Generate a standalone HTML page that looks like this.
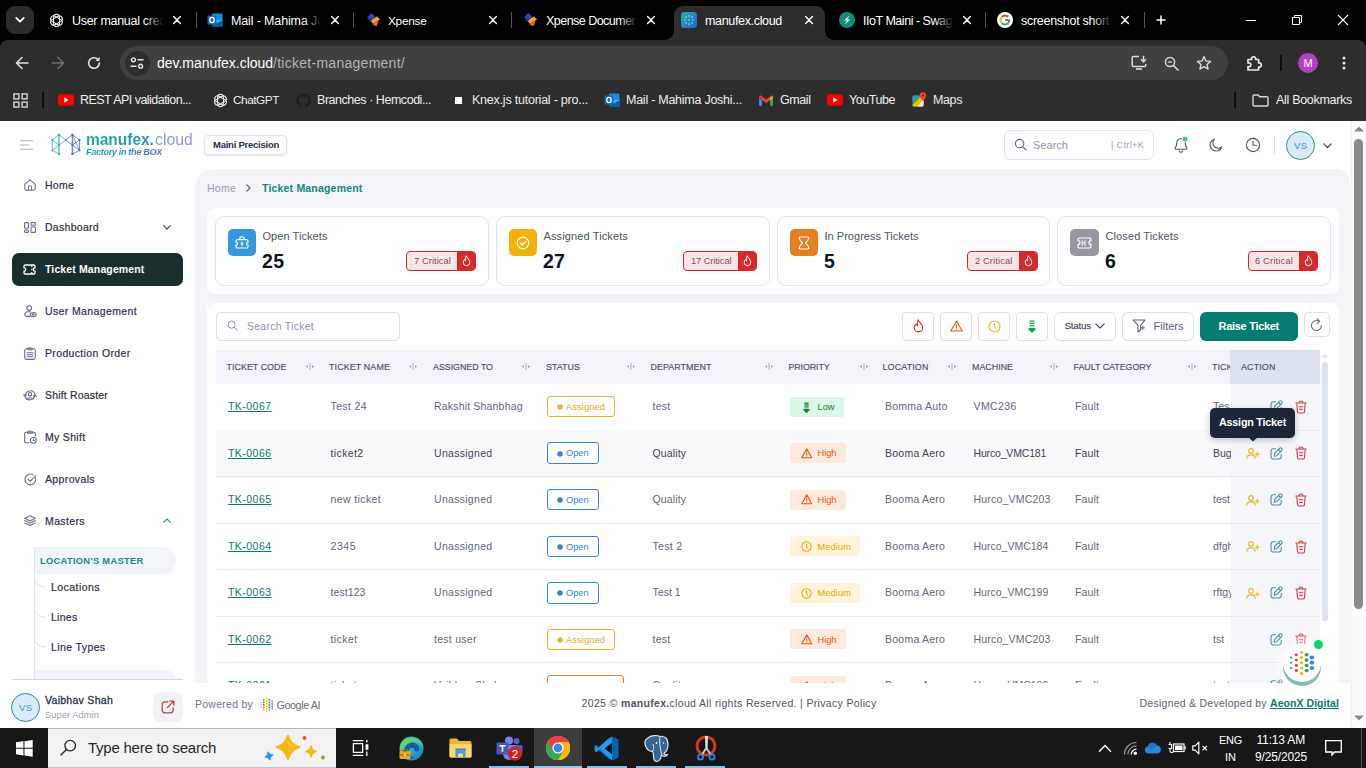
<!DOCTYPE html>
<html>
<head>
<meta charset="utf-8">
<title>manufex.cloud</title>
<style>
*{box-sizing:border-box;margin:0;padding:0}
html,body{width:1366px;height:768px;overflow:hidden;background:#fff;font-family:"Liberation Sans",sans-serif;}
.a{position:absolute}
.t{position:absolute;white-space:nowrap;line-height:1}
#root{position:relative;width:1366px;height:768px;overflow:hidden}
svg{position:absolute;overflow:visible}
/* ---------- browser chrome ---------- */
#tabstrip{left:0;top:0;width:1366px;height:50px;background:#000}
#toolbar{left:0;top:40px;width:1366px;height:81px;background:#2d2d2d;border-top-left-radius:8px;border-top-right-radius:8px}
.tt{position:absolute;top:13px;height:16px;line-height:16px;font-size:12.5px;color:#fff;white-space:nowrap;overflow:hidden}
.fade{position:absolute;top:8px;height:26px;width:22px;background:linear-gradient(90deg,rgba(0,0,0,0),#000 85%)}
.tsep{position:absolute;top:12px;width:1px;height:16px;background:#555}
.bm{position:absolute;top:92px;height:16px;line-height:16px;color:#eee;font-size:12.5px;white-space:nowrap}
/* ---------- app ---------- */
#app{left:0;top:121px;width:1350px;height:607px;background:#fff;overflow:hidden}
.nav{position:absolute;left:45px;font-size:10.5px;line-height:12px;color:#2b3050;white-space:nowrap;-webkit-text-stroke:.2px #2b3050}
.sub{position:absolute;left:51px;font-size:10.5px;line-height:12px;color:#2b3050;white-space:nowrap;-webkit-text-stroke:.2px #2b3050}
.ni{stroke:#687090;fill:none;stroke-width:1.1;stroke-linecap:round;stroke-linejoin:round}
.th{top:361.500px;font-size:8.900px;line-height:11px;color:#47506b;-webkit-text-stroke:.15px #47506b}
.td{font-size:10.500px;line-height:12px}
/* ---------- taskbar ---------- */
#taskbar{left:0;top:728px;width:1366px;height:40px;background:#171717}
</style>
</head>
<body>
<div id="root">
<!-- ================= TAB STRIP ================= -->
<div id="tabstrip" class="a"></div>
<div id="toolbar" class="a"></div>
<!-- tab search button -->
<div class="a" style="left:6px;top:6px;width:28px;height:28px;border-radius:9px;background:#2b2b2b"></div>
<svg style="left:15px;top:16px" width="10" height="8" viewBox="0 0 10 8"><path d="M1.2 1.8 L5 5.6 L8.8 1.8" fill="none" stroke="#fff" stroke-width="1.7" stroke-linecap="round" stroke-linejoin="round"/></svg>

<!-- active tab shape -->
<svg style="left:664px;top:6px" width="172" height="34" viewBox="0 0 172 34"><path d="M0 34 C6 34 10 30 10 24 L10 10 C10 4 14 0 20 0 L151 0 C157 0 161 4 161 10 L161 24 C161 30 165 34 171 34 Z" fill="#2d2d2d"/></svg>

<!-- tab 1 : ChatGPT -->
<svg style="left:48.500px;top:12.500px" width="15" height="15" viewBox="0 0 24 24"><g fill="none" stroke="#ececec" stroke-width="1.7"><rect x="7.300" y="2" width="9.400" height="20" rx="4.700" transform="rotate(0 12 12)"/><rect x="7.300" y="2" width="9.400" height="20" rx="4.700" transform="rotate(60 12 12)"/><rect x="7.300" y="2" width="9.400" height="20" rx="4.700" transform="rotate(120 12 12)"/></g></svg>
<div class="tt" style="left:72px;width:92px"><span style="letter-spacing:-0.291px">User manual crea</span></div>
<div class="fade" style="left:145px"></div>
<svg class="tx" style="left:173px;top:16px" width="8" height="8" viewBox="0 0 8 8"><path d="M0.6 0.6 L7.4 7.4 M7.4 0.6 L0.6 7.4" stroke="#fff" stroke-width="1.4" stroke-linecap="round"/></svg>
<div class="tsep" style="left:196px"></div>

<!-- tab 2 : Outlook -->
<svg style="left:207px;top:12px" width="16" height="16" viewBox="0 0 16 16"><rect x="5" y="1.5" width="10.5" height="13" rx="1.2" fill="#1490df"/><rect x="5" y="8" width="10.5" height="6.5" fill="#0a5cab"/><path d="M5 8 L15.5 8 L10 11.6 Z" fill="#35b8f1"/><rect x="0.5" y="3.5" width="9" height="9" rx="1.2" fill="#0f6cbd"/><ellipse cx="5" cy="8" rx="2.2" ry="2.6" fill="none" stroke="#fff" stroke-width="1.3"/></svg>
<div class="tt" style="left:231px;width:92px"><span style="letter-spacing:-0.136px">Mail - Mahima Jo</span></div>
<div class="fade" style="left:303px"></div>
<svg style="left:331px;top:16px" width="8" height="8" viewBox="0 0 8 8"><path d="M0.6 0.6 L7.4 7.4 M7.4 0.6 L0.6 7.4" stroke="#fff" stroke-width="1.4" stroke-linecap="round"/></svg>
<div class="tsep" style="left:353px"></div>

<!-- tab 3 : Xpense -->
<svg style="left:366px;top:12px" width="15" height="16" viewBox="0 0 15 16"><path d="M1 5.5 L5.5 1 L9.5 5 L4.5 7.5 Z" fill="#2b44d6"/><path d="M4 8.5 L11 4.5 L14 7.5 L7 11.5 Z" fill="#f7a338"/><path d="M6 12 L12.5 8.5 L10.5 14.5 Z" fill="#ef6b23"/><path d="M1.5 6 L3.5 10 L6.5 8 Z" fill="#1c2d9c"/></svg>
<div class="tt" style="left:388px;width:92px"><span style="font-size:11.800px;letter-spacing:-0.253px">Xpense</span></div>
<svg style="left:489px;top:16px" width="8" height="8" viewBox="0 0 8 8"><path d="M0.6 0.6 L7.4 7.4 M7.4 0.6 L0.6 7.4" stroke="#fff" stroke-width="1.4" stroke-linecap="round"/></svg>
<div class="tsep" style="left:511px"></div>

<!-- tab 4 : Xpense Docume -->
<svg style="left:523px;top:12px" width="15" height="16" viewBox="0 0 15 16"><path d="M1 5.5 L5.5 1 L9.5 5 L4.5 7.5 Z" fill="#2b44d6"/><path d="M4 8.5 L11 4.5 L14 7.5 L7 11.5 Z" fill="#f7a338"/><path d="M6 12 L12.5 8.5 L10.5 14.5 Z" fill="#ef6b23"/><path d="M1.5 6 L3.5 10 L6.5 8 Z" fill="#1c2d9c"/></svg>
<div class="tt" style="left:546px;width:92px"><span style="letter-spacing:-0.527px">Xpense Documen</span></div>
<div class="fade" style="left:619px"></div>
<svg style="left:647px;top:16px" width="8" height="8" viewBox="0 0 8 8"><path d="M0.6 0.6 L7.4 7.4 M7.4 0.6 L0.6 7.4" stroke="#fff" stroke-width="1.4" stroke-linecap="round"/></svg>

<!-- tab 5 : manufex.cloud (active) -->
<svg style="left:681px;top:12px" width="16" height="16" viewBox="0 0 16 16"><defs><linearGradient id="mfg" x1="0" y1="0" x2="1" y2="1"><stop offset="0" stop-color="#1fb6a8"/><stop offset="1" stop-color="#2a5bd0"/></linearGradient></defs><rect width="16" height="16" rx="3" fill="url(#mfg)"/><g fill="#9fe4f0"><circle cx="5" cy="5" r=".8"/><circle cx="8" cy="4" r=".8"/><circle cx="11" cy="5" r=".8"/><circle cx="4" cy="8" r=".8"/><circle cx="8" cy="8" r=".8"/><circle cx="12" cy="8" r=".8"/><circle cx="5" cy="11" r=".8"/><circle cx="8" cy="12" r=".8"/><circle cx="11" cy="11" r=".8"/></g></svg>
<div class="tt" style="left:705px;width:92px"><span style="letter-spacing:-0.332px">manufex.cloud</span></div>
<svg style="left:805px;top:16px" width="8" height="8" viewBox="0 0 8 8"><path d="M0.6 0.6 L7.4 7.4 M7.4 0.6 L0.6 7.4" stroke="#fff" stroke-width="1.4" stroke-linecap="round"/></svg>

<!-- tab 6 : IIoT Maini -->
<svg style="left:839px;top:12px" width="16" height="16" viewBox="0 0 16 16"><circle cx="8" cy="8" r="8" fill="#0f8f7a"/><path d="M10.8 3.2 L5.2 8.6 L8 8.6 L5.6 12.8 L11 7.4 L8.2 7.4 Z" fill="#fff"/></svg>
<div class="tt" style="left:863px;width:92px"><span style="letter-spacing:-0.472px">IIoT Maini - Swag</span></div>
<div class="fade" style="left:935px"></div>
<svg style="left:963px;top:16px" width="8" height="8" viewBox="0 0 8 8"><path d="M0.6 0.6 L7.4 7.4 M7.4 0.6 L0.6 7.4" stroke="#fff" stroke-width="1.4" stroke-linecap="round"/></svg>
<div class="tsep" style="left:985px"></div>

<!-- tab 7 : Google -->
<svg style="left:997px;top:12px" width="16" height="16" viewBox="0 0 16 16"><circle cx="8" cy="8" r="8" fill="#fff"/><path d="M8 3.6 A4.4 4.4 0 0 1 11.1 4.9" fill="none" stroke="#ea4335" stroke-width="2"/><path d="M4.9 4.9 A4.4 4.4 0 0 1 8 3.6" fill="none" stroke="#ea4335" stroke-width="2"/><path d="M4.9 11.1 A4.4 4.4 0 0 1 4.9 4.9" fill="none" stroke="#fbbc05" stroke-width="2"/><path d="M11.1 11.1 A4.4 4.4 0 0 1 4.9 11.1" fill="none" stroke="#34a853" stroke-width="2"/><path d="M12.4 8 A4.4 4.4 0 0 1 11.1 11.1" fill="none" stroke="#4285f4" stroke-width="2"/><path d="M8 8 L12.6 8" stroke="#4285f4" stroke-width="2"/></svg>
<div class="tt" style="left:1021px;width:92px"><span style="letter-spacing:-0.276px">screenshot short</span></div>
<div class="fade" style="left:1093px"></div>
<svg style="left:1121px;top:16px" width="8" height="8" viewBox="0 0 8 8"><path d="M0.6 0.6 L7.4 7.4 M7.4 0.6 L0.6 7.4" stroke="#fff" stroke-width="1.4" stroke-linecap="round"/></svg>
<div class="tsep" style="left:1144px"></div>
<!-- new tab + -->
<svg style="left:1156px;top:15px" width="10" height="10" viewBox="0 0 10 10"><path d="M5 0.5 V9.5 M0.5 5 H9.5" stroke="#fff" stroke-width="1.5"/></svg>
<!-- window controls -->
<div class="a" style="left:1246px;top:20px;width:10px;height:1px;background:#fff"></div>
<svg style="left:1292px;top:15px" width="10" height="10" viewBox="0 0 10 10"><path d="M0.5 2.5 H7.5 V9.5 H0.5 Z" fill="none" stroke="#fff" stroke-width="1"/><path d="M2.5 2.5 V0.5 H9.5 V7.5 H7.5" fill="none" stroke="#fff" stroke-width="1"/></svg>
<svg style="left:1338px;top:15px" width="10" height="10" viewBox="0 0 10 10"><path d="M0 0 L10 10 M10 0 L0 10" stroke="#fff" stroke-width="1.1"/></svg>

<!-- ================= TOOLBAR ================= -->
<!-- back -->
<svg style="left:15px;top:56px" width="14" height="14" viewBox="0 0 14 14"><path d="M13 7 H1.5 M7 1.5 L1.5 7 L7 12.5" fill="none" stroke="#e3e3e3" stroke-width="1.6" stroke-linecap="round" stroke-linejoin="round"/></svg>
<!-- forward -->
<svg style="left:51px;top:56px" width="14" height="14" viewBox="0 0 14 14"><path d="M1 7 H12.5 M7 1.5 L12.5 7 L7 12.5" fill="none" stroke="#6e6e6e" stroke-width="1.6" stroke-linecap="round" stroke-linejoin="round"/></svg>
<!-- reload -->
<svg style="left:87px;top:56px" width="14" height="14" viewBox="0 0 14 14"><path d="M12.3 7 A5.3 5.3 0 1 1 10.6 3.1" fill="none" stroke="#e3e3e3" stroke-width="1.6" stroke-linecap="round"/><path d="M12.6 0.8 V5 H8.4 Z" fill="#e3e3e3"/></svg>
<!-- omnibox -->
<div class="a" style="left:120px;top:46px;width:1108px;height:34px;border-radius:17px;background:#404040"></div>
<div class="a" style="left:124.500px;top:50.500px;width:25px;height:25px;border-radius:12.500px;background:#2e2e2e"></div>
<svg style="left:130px;top:57px" width="14" height="12" viewBox="0 0 14 12"><g fill="none" stroke="#e8e8e8" stroke-width="1.4" stroke-linecap="round"><circle cx="3.4" cy="2.8" r="1.9"/><path d="M8 2.8 H13"/><circle cx="10.6" cy="9.2" r="1.9"/><path d="M1 9.2 H6"/></g></svg>
<div class="t" style="left:157px;top:55px;font-size:14px;line-height:16px;color:#fff"><span style="letter-spacing:-0.028px">dev.manufex.cloud</span><span style="color:#b4b4b4;letter-spacing:0.271px">/ticket-management/</span></div>
<!-- install -->
<svg style="left:1131px;top:55px" width="17" height="16" viewBox="0 0 17 16"><path d="M8 1.5 H2.5 A1.3 1.3 0 0 0 1.2 2.8 V10.2 A1.3 1.3 0 0 0 2.5 11.5 H13.5 A1.3 1.3 0 0 0 14.8 10.2 V9" fill="none" stroke="#d8d8d8" stroke-width="1.5"/><path d="M5 14 H11" stroke="#d8d8d8" stroke-width="1.6"/><path d="M12.5 0.8 V6.5 M10 4.2 L12.5 6.8 L15 4.2" fill="none" stroke="#d8d8d8" stroke-width="1.5"/></svg>
<!-- zoom -->
<svg style="left:1164px;top:56px" width="15" height="15" viewBox="0 0 15 15"><circle cx="6" cy="6" r="4.6" fill="none" stroke="#d8d8d8" stroke-width="1.5"/><path d="M9.5 9.5 L14 14" stroke="#d8d8d8" stroke-width="1.7" stroke-linecap="round"/><path d="M3.8 6 H8.2" stroke="#d8d8d8" stroke-width="1.3"/></svg>
<!-- star -->
<svg style="left:1196px;top:55px" width="16" height="16" viewBox="0 0 16 16"><path d="M8 1.6 L9.9 6 L14.6 6.4 L11 9.5 L12.1 14.1 L8 11.6 L3.9 14.1 L5 9.5 L1.4 6.4 L6.1 6 Z" fill="none" stroke="#d8d8d8" stroke-width="1.4" stroke-linejoin="round"/></svg>
<!-- extensions -->
<svg style="left:1246px;top:54px" width="17" height="18" viewBox="0 0 17 18"><path d="M2 5.5 H5.6 A2.1 2.1 0 1 1 9.6 5.5 H12.6 V9 A2.1 2.1 0 1 1 12.6 13 V16 H2 V12.6 A2 2 0 1 0 2 9 Z" fill="none" stroke="#e8e8e8" stroke-width="1.7" stroke-linejoin="round"/></svg>
<div class="a" style="left:1280px;top:55px;width:2px;height:16px;background:#0a0a0a"></div>
<div class="a" style="left:1298px;top:53px;width:20px;height:20px;border-radius:10px;background:#b341c4;color:#fff;font-size:11px;line-height:20px;text-align:center">M</div>
<svg style="left:1342px;top:56px" width="4" height="14" viewBox="0 0 4 14"><g fill="#e3e3e3"><circle cx="2" cy="2" r="1.5"/><circle cx="2" cy="7" r="1.5"/><circle cx="2" cy="12" r="1.5"/></g></svg>

<!-- ================= BOOKMARKS ================= -->
<svg style="left:13px;top:93px" width="15" height="15" viewBox="0 0 15 15"><g fill="none" stroke="#d6d6d6" stroke-width="1.4"><rect x="0.9" y="0.9" width="5" height="5"/><rect x="9.1" y="0.9" width="5" height="5"/><rect x="0.9" y="9.1" width="5" height="5"/><rect x="9.1" y="9.1" width="5" height="5"/></g></svg>
<div class="a" style="left:42px;top:92px;width:2px;height:16px;background:#0a0a0a"></div>
<svg style="left:58px;top:94px" width="16" height="12" viewBox="0 0 16 12"><rect width="16" height="11.4" y=".3" rx="3.2" fill="#f00"/><path d="M6.3 3.2 L10.6 6 L6.3 8.8 Z" fill="#fff"/></svg>
<div class="bm" style="left:80px;letter-spacing:-0.534px">REST API validation...</div>
<svg style="left:212.500px;top:92.500px" width="15" height="15" viewBox="0 0 24 24"><g fill="none" stroke="#ececec" stroke-width="1.7"><rect x="7.300" y="2" width="9.400" height="20" rx="4.700" transform="rotate(0 12 12)"/><rect x="7.300" y="2" width="9.400" height="20" rx="4.700" transform="rotate(60 12 12)"/><rect x="7.300" y="2" width="9.400" height="20" rx="4.700" transform="rotate(120 12 12)"/></g></svg>
<div class="bm" style="left:233px;font-size:11.800px;letter-spacing:-0.453px">ChatGPT</div>
<svg style="left:296px;top:93px" width="15" height="15" viewBox="0 0 16 16"><path d="M8 .4 a7.8 7.8 0 0 0 -2.5 15.2 c.4 .1 .5 -.2 .5 -.4 v-1.4 c-2.2 .5 -2.6 -1 -2.6 -1 -.4 -.9 -.9 -1.2 -.9 -1.2 -.7 -.5 .1 -.5 .1 -.5 .8 .1 1.2 .8 1.2 .8 .7 1.2 1.9 .9 2.3 .7 .1 -.5 .3 -.9 .5 -1.1 -1.7 -.2 -3.6 -.9 -3.6 -3.9 0 -.9 .3 -1.6 .8 -2.1 -.1 -.2 -.4 -1 .1 -2.1 0 0 .7 -.2 2.2 .8 a7.5 7.5 0 0 1 4 0 c1.500 -1 2.200 -.800 2.200 -.800 .4 1.100 .2 1.900 .1 2.100 .5 .6 .8 1.300 .8 2.100 0 3 -1.800 3.700 -3.600 3.900 .3 .2 .5 .7 .5 1.500 v2.200 c0 .2 .1 .5 .5 .4 A7.800 7.800 0 0 0 8 .4 z" fill="#1c1e21"/></svg>
<div class="bm" style="left:317px;letter-spacing:-0.461px">Branches · Hemcodi...</div>
<div class="a" style="left:454px;top:96px;width:9px;height:9px;background:#2f3339"></div>
<div class="a" style="left:455px;top:97px;width:7px;height:7px;background:#fff"></div>
<div class="bm" style="left:472px;letter-spacing:-0.223px">Knex.js tutorial - pro...</div>
<svg style="left:604px;top:92px" width="16" height="16" viewBox="0 0 16 16"><rect x="5" y="1.5" width="10.5" height="13" rx="1.2" fill="#1490df"/><rect x="5" y="8" width="10.5" height="6.5" fill="#0a5cab"/><path d="M5 8 L15.5 8 L10 11.6 Z" fill="#35b8f1"/><rect x="0.5" y="3.5" width="9" height="9" rx="1.2" fill="#0f6cbd"/><ellipse cx="5" cy="8" rx="2.2" ry="2.6" fill="none" stroke="#fff" stroke-width="1.3"/></svg>
<div class="bm" style="left:626px;letter-spacing:-0.253px">Mail - Mahima Joshi...</div>
<svg style="left:759px;top:95px" width="14" height="11" viewBox="0 0 14 11"><path d="M0 1.2 V10.5 H3 V5 L7 8 L11 5 V10.5 H14 V1.2 L12.6 0.3 L7 4.5 L1.4 0.3 Z" fill="#ea4335"/><path d="M0 1.2 V10.5 H3 V3.4 Z" fill="#4285f4"/><path d="M14 1.2 V10.5 H11 V3.4 Z" fill="#34a853"/><path d="M0 1.2 L3 3.4 V5.2 L0 3 Z" fill="#c5221f"/><path d="M14 1.2 L11 3.4 V5.2 L14 3 Z" fill="#fbbc04"/></svg>
<div class="bm" style="left:780px;letter-spacing:-0.431px">Gmail</div>
<svg style="left:827px;top:94px" width="16" height="12" viewBox="0 0 16 12"><rect width="16" height="11.4" y=".3" rx="3.2" fill="#f00"/><path d="M6.3 3.2 L10.6 6 L6.3 8.8 Z" fill="#fff"/></svg>
<div class="bm" style="left:849px;letter-spacing:-0.446px">YouTube</div>
<svg style="left:912px;top:92px" width="15" height="16" viewBox="0 0 15 16"><rect x="0.5" y="3.5" width="11" height="11" rx="1.5" fill="#34a853"/><path d="M0.5 13 L8 5.5 L11.5 9 V13 A1.5 1.5 0 0 1 10 14.5 H2 A1.5 1.5 0 0 1 .5 13 Z" fill="#fbbc04"/><path d="M.5 5 A1.5 1.5 0 0 1 2 3.500 H6 L.5 9 Z" fill="#4285f4"/><path d="M5 14.500 L11.500 8 V13 A1.500 1.500 0 0 1 10 14.500 Z" fill="#e8eaed"/><path d="M11 0.300 A3.200 3.200 0 0 0 7.800 3.500 C7.800 5.800 11 9 11 9 C11 9 14.200 5.800 14.200 3.500 A3.200 3.200 0 0 0 11 .3 Z" fill="#ea4335"/><circle cx="11" cy="3.500" r="1.100" fill="#7b1d14"/></svg>
<div class="bm" style="left:933px;letter-spacing:-0.395px">Maps</div>
<div class="a" style="left:1234px;top:92px;width:2px;height:16px;background:#0a0a0a"></div>
<svg style="left:1252px;top:94px" width="17" height="13" viewBox="0 0 17 13"><path d="M1 2.200 A1.200 1.200 0 0 1 2.200 1 H6.200 L7.800 2.800 H14.800 A1.200 1.200 0 0 1 16 4 V10.800 A1.200 1.200 0 0 1 14.800 12 H2.200 A1.200 1.200 0 0 1 1 10.800 Z" fill="none" stroke="#d6d6d6" stroke-width="1.4"/></svg>
<div class="bm" style="left:1276px;letter-spacing:-0.299px">All Bookmarks</div>
<!-- ================= APP ================= -->
<div id="app" class="a"></div>
<!-- header: hamburger -->
<svg style="left:20px;top:140px" width="14" height="10" viewBox="0 0 14 10"><path d="M0.6 0.8 H12.6 M0.6 5 H9 M0.6 9.2 H12.6" stroke="#a9afc6" stroke-width="1.1" stroke-linecap="round"/></svg>
<!-- logo icon -->
<svg style="left:50px;top:133px" width="32" height="23" viewBox="0 0 32 23">
 <path d="M9 2 V21" stroke="#9fe0d8" stroke-width="2.200" opacity=".7"/>
 <path d="M22.400 2 V21" stroke="#aab6f0" stroke-width="2.200" opacity=".55"/>
 <g fill="none" stroke-width=".75">
  <path d="M8.800 1.600 L2.300 7 V17.300 L9 21 M8.800 1.600 L15.800 7 L9 12 L2.300 7 M2.300 17.300 L9 12 M9 1.600 V21" stroke="#2bb5a5"/>
  <path d="M15.800 7 L22.400 1.600 L29.500 7 V17.300 L22.400 21 V1.600 M15.800 7 L22.400 12 L29.500 17.300 M22.400 12 L29.500 7 M22.400 1.600 L29.500 17.300" stroke="#4463d6"/>
 </g>
 <g fill="#2bb5a5"><circle cx="8.800" cy="1.600" r="1.150"/><circle cx="2.300" cy="7" r="1.150"/><circle cx="2.300" cy="17.300" r="1.150"/><circle cx="9" cy="21" r="1.150"/><circle cx="9" cy="12" r="1.050"/><circle cx="15.800" cy="7" r="1.150"/></g>
 <g fill="#4463d6"><circle cx="22.400" cy="1.600" r="1.150"/><circle cx="29.500" cy="7" r="1.150"/><circle cx="29.500" cy="17.300" r="1.150"/><circle cx="22.400" cy="21" r="1.150"/><circle cx="22.400" cy="12" r="1.050"/></g>
</svg>
<!-- logo text -->
<div class="t" style="left:86px;top:131.200px;font-size:17px;line-height:18px;font-weight:bold;color:transparent;background:linear-gradient(90deg,#19ab98 10%,#2a8ec6 100%);-webkit-background-clip:text;background-clip:text;transform:scaleX(.91);transform-origin:0 0">manufex.</div>
<div class="t" style="left:155px;top:131.200px;font-size:17px;line-height:18px;color:transparent;background:linear-gradient(90deg,#74a0e6,#9a8cee);-webkit-background-clip:text;background-clip:text;transform:scaleX(.93);transform-origin:0 0">cloud</div>
<div class="t" style="left:86px;top:146.600px;font-size:9.200px;line-height:11px;font-style:italic;font-weight:bold;color:transparent;background:linear-gradient(90deg,#19ab98,#5a6fd8);-webkit-background-clip:text;background-clip:text;letter-spacing:-0.372px">Factory in the BOX</div>
<!-- company button -->
<div class="a" style="left:204px;top:135px;width:83px;height:20px;border:1px solid #e3e6ee;border-radius:4px;background:#fff;box-shadow:0 1px 2px rgba(40,50,90,.12)"></div>
<div class="t" style="left:213px;top:140px;font-size:9.5px;line-height:10px;font-weight:bold;color:#273048;letter-spacing:-0.246px">Maini Precision</div>

<!-- header: search -->
<div class="a" style="left:1004px;top:130px;width:150px;height:30px;border:1px solid #e1e5ef;border-radius:6px;background:#fff"></div>
<svg style="left:1014px;top:138px" width="13" height="13" viewBox="0 0 13 13"><circle cx="5.600" cy="5.600" r="4.200" fill="none" stroke="#5b6380" stroke-width="1.100"/><path d="M8.800 8.800 L12 12" stroke="#5b6380" stroke-width="1.100" stroke-linecap="round"/></svg>
<div class="t" style="left:1033px;top:139px;font-size:11px;line-height:12px;color:#8e96b5;letter-spacing:0.023px">Search</div>
<div class="t" style="left:1111px;top:140px;font-size:9px;line-height:10px;color:#9aa1bd;letter-spacing:0.363px">| Ctrl+K</div>
<!-- bell -->
<svg style="left:1173px;top:136px" width="16" height="18" viewBox="0 0 16 18"><path d="M8 2.500 C5 2.500 3.800 4.800 3.800 7 C3.800 9.500 3 10.800 2.200 11.800 C1.800 12.400 2.200 13.200 3 13.200 H13 C13.800 13.200 14.200 12.400 13.800 11.800 C13 10.800 12.200 9.500 12.200 7 C12.200 4.800 11 2.500 8 2.500 Z" fill="none" stroke="#4b5372" stroke-width="1.100"/><path d="M6.300 14.800 C6.600 15.800 7.200 16.300 8 16.300 C8.800 16.300 9.400 15.800 9.700 14.800" fill="none" stroke="#4b5372" stroke-width="1.100" stroke-linecap="round"/><circle cx="12" cy="3.200" r="3" fill="#3ecf6a" stroke="#fff" stroke-width=".9"/></svg>
<!-- moon -->
<svg style="left:1209px;top:138px" width="14" height="14" viewBox="0 0 14 14"><path d="M5.500 1.200 A6 6 0 1 0 12.800 8.800 A5 5 0 0 1 5.500 1.200 Z" fill="none" stroke="#4b5372" stroke-width="1.100" stroke-linejoin="round"/></svg>
<!-- clock -->
<svg style="left:1245px;top:137px" width="16" height="16" viewBox="0 0 16 16"><circle cx="8" cy="8" r="6.600" fill="none" stroke="#4b5372" stroke-width="1.100"/><path d="M8 4 V8.200 H11.500" fill="none" stroke="#4b5372" stroke-width="1.100" stroke-linecap="round"/></svg>
<div class="a" style="left:1274px;top:136px;width:1px;height:18px;background:#d9dde7"></div>
<div class="a" style="left:1286px;top:131px;width:29px;height:29px;border-radius:15px;background:#d9eaf9;border:1px solid #2a8f8a"></div>
<div class="t" style="left:1294px;top:141px;font-size:9.500px;line-height:10px;color:#4a8fd8;letter-spacing:0.406px">VS</div>
<svg style="left:1323px;top:143px" width="9" height="6" viewBox="0 0 9 6"><path d="M0.800 0.800 L4.500 4.500 L8.200 0.800" fill="none" stroke="#3b4460" stroke-width="1.200" stroke-linecap="round" stroke-linejoin="round"/></svg>

<!-- ================= SIDEBAR ================= -->
<!-- Home -->
<svg style="left:24px;top:179px" width="12" height="12" viewBox="0 0 12 12"><path class="ni" d="M0.800 5.200 L6 0.900 L11.200 5.200 V9.800 A1.400 1.400 0 0 1 9.800 11.200 H2.200 A1.400 1.400 0 0 1 0.800 9.800 Z"/><path class="ni" d="M4.400 11 V8.300 A1.600 1.600 0 0 1 7.600 8.300 V11"/></svg>
<div class="nav" style="top:179px;letter-spacing:0.246px">Home</div>
<!-- Dashboard -->
<svg style="left:24px;top:222px" width="12" height="11" viewBox="0 0 12 11"><rect class="ni" x="0.600" y="0.600" width="3.800" height="5.600" rx=".7"/><rect class="ni" x="7" y="0.600" width="4.400" height="2.600" rx=".7"/><rect class="ni" x="0.600" y="8" width="3.800" height="2.400" rx=".7"/><rect class="ni" x="7" y="5" width="4.400" height="5.400" rx=".7"/></svg>
<div class="nav" style="top:221px;letter-spacing:0.292px">Dashboard</div>
<svg style="left:163px;top:225px" width="8" height="5" viewBox="0 0 8 5"><path d="M0.700 0.700 L4 4 L7.300 0.700" fill="none" stroke="#3b4460" stroke-width="1.100" stroke-linecap="round" stroke-linejoin="round"/></svg>
<!-- Ticket Management (active) -->
<div class="a" style="left:12px;top:253px;width:171px;height:33px;border-radius:7px;background:#1a2e2e"></div>
<svg style="left:23px;top:264px" width="13" height="11" viewBox="0 0 13 11"><path d="M1 2.200 A1.200 1.200 0 0 1 2.200 1 H10.800 A1.200 1.200 0 0 1 12 2.200 V3.800 A1.700 1.700 0 0 0 12 7.200 V8.800 A1.200 1.200 0 0 1 10.800 10 H2.200 A1.200 1.200 0 0 1 1 8.800 V7.200 A1.700 1.700 0 0 0 1 3.800 Z" fill="none" stroke="#fff" stroke-width="1.300"/><path d="M8.800 1.500 V3 M8.800 4.700 V6.300 M8.800 8 V9.500" stroke="#fff" stroke-width="1.200"/></svg>
<div class="nav" style="top:263px;color:#fff;font-weight:bold;-webkit-text-stroke:0;letter-spacing:0.131px">Ticket Management</div>
<!-- User Management -->
<svg style="left:24px;top:305px" width="13" height="13" viewBox="0 0 13 13"><circle class="ni" cx="5.200" cy="3" r="2.300"/><path class="ni" d="M6.500 6.800 H3.800 A3 3 0 0 0 0.800 9.800 A1.600 1.600 0 0 0 2.400 11.400 H6"/><ellipse class="ni" cx="9.300" cy="9.600" rx="3" ry="2.100"/><circle class="ni" cx="9.300" cy="9.600" r=".8"/></svg>
<div class="nav" style="top:305px;letter-spacing:0.375px">User Management</div>
<!-- Production Order -->
<svg style="left:24px;top:347px" width="12" height="13" viewBox="0 0 12 13"><rect class="ni" x="0.700" y="1.800" width="10.600" height="10.600" rx="1.600"/><path class="ni" d="M3.800 1.900 C3.800 0.300 8.200 0.300 8.200 1.900 V2.800 H3.800 Z"/><path class="ni" d="M3 5.800 H9 M3 7.800 H9 M3 9.800 H9" stroke-width=".8"/></svg>
<div class="nav" style="top:347px;letter-spacing:0.346px">Production Order</div>
<!-- Shift Roaster -->
<svg style="left:23px;top:389px" width="14" height="13" viewBox="0 0 14 13"><path class="ni" d="M2.300 8.500 A5.200 5.200 0 0 1 11.800 4.500 M11.700 4.500 A5.200 5.200 0 0 1 2.400 8.600"/><path class="ni" d="M0.600 5.600 L2 7.200 L3.600 5.800 M13.400 7.400 L12 5.800 L10.400 7.200"/><circle class="ni" cx="7" cy="5.200" r="1.700"/><path class="ni" d="M3.900 10.200 C4.500 8.300 9.500 8.300 10.100 10.200"/></svg>
<div class="nav" style="top:389px;letter-spacing:0.177px">Shift Roaster</div>
<!-- My Shift -->
<svg style="left:24px;top:430px" width="13" height="14" viewBox="0 0 13 14"><path class="ni" d="M5 12.800 H2 A1.300 1.300 0 0 1 0.700 11.500 V3.500 A1.300 1.300 0 0 1 2 2.200 H10 A1.300 1.300 0 0 1 11.300 3.500 V6"/><path class="ni" d="M3.500 2.300 C3.500 0.500 8.500 0.500 8.500 2.300 V3.200 H3.500 Z"/><circle class="ni" cx="9.300" cy="10.200" r="3"/><path class="ni" d="M9.300 8.800 V10.400 H10.500" stroke-width=".9"/></svg>
<div class="nav" style="top:431px;letter-spacing:0.320px">My Shift</div>
<!-- Approvals -->
<svg style="left:24px;top:473px" width="13" height="13" viewBox="0 0 13 13"><path class="ni" d="M11.600 5 A5.400 5.400 0 1 1 9 1.700" stroke-width="1.200"/><path class="ni" d="M4 6.200 L6.200 8.400 L11.800 2.600" stroke-width="1.200"/></svg>
<div class="nav" style="top:473px;letter-spacing:0.366px">Approvals</div>
<!-- Masters -->
<svg style="left:24px;top:515px" width="12" height="12" viewBox="0 0 12 12"><path class="ni" d="M6 0.700 L11.300 3.300 L6 5.900 L0.700 3.300 Z"/><path class="ni" d="M0.700 5.600 L6 8.200 L11.300 5.600 M0.700 7.900 L6 10.500 L11.300 7.900" /></svg>
<div class="nav" style="top:515px;letter-spacing:0.379px">Masters</div>
<svg style="left:163px;top:518px" width="8" height="5" viewBox="0 0 8 5"><path d="M0.700 4.300 L4 1 L7.300 4.300" fill="none" stroke="#1f9488" stroke-width="1.100" stroke-linecap="round" stroke-linejoin="round"/></svg>
<!-- submenu -->
<div class="a" style="left:34px;top:547px;width:1px;height:132px;background:#dfe4ee"></div>
<div class="a" style="left:35px;top:547px;width:141px;height:27px;background:#f1f4f8;border-radius:0 14px 14px 0"></div>
<div class="t" style="left:40px;top:556px;font-size:9.300px;line-height:10px;font-weight:bold;color:#1a8a85;letter-spacing:0.317px">LOCATION'S MASTER</div>
<svg style="left:34px;top:575px" width="14" height="80" viewBox="0 0 14 80"><path d="M0.500 0 C0.500 8 3 12 12 12 M0.500 30 C0.500 38 3 42 12 42 M0.500 60 C0.500 68 3 72 12 72" fill="none" stroke="#dfe4ee" stroke-width="1"/></svg>
<div class="sub" style="top:581px;letter-spacing:0.450px">Locations</div>
<div class="sub" style="top:611px;letter-spacing:0.278px">Lines</div>
<div class="sub" style="top:641px;letter-spacing:0.391px">Line Types</div>
<div class="a" style="left:35px;top:670px;width:141px;height:10px;background:#f1f4f8;border-radius:0 14px 0 0"></div>
<!-- sidebar footer -->
<div class="a" style="left:0;top:679px;width:195px;height:49px;background:#fff"></div>
<div class="a" style="left:12px;top:679px;width:171px;height:1px;background:#d3d7df"></div>
<div class="a" style="left:11px;top:693px;width:29px;height:29px;border-radius:15px;background:#d9eaf9;border:1px solid #2a8f8a"></div>
<div class="t" style="left:19px;top:703px;font-size:9.500px;line-height:10px;color:#4a8fd8;letter-spacing:0.406px">VS</div>
<div class="t" style="left:45px;top:694px;font-size:10.500px;line-height:12px;color:#2b3050;-webkit-text-stroke:.3px #2b3050;letter-spacing:0.283px">Vaibhav Shah</div>
<div class="t" style="left:45px;top:710px;font-size:9.300px;line-height:10px;color:#9aa0b8;letter-spacing:0.070px">Super Admin</div>
<div class="a" style="left:153px;top:692px;width:30px;height:30px;border-radius:8px;background:#f1f3f7"></div>
<svg style="left:161px;top:700px" width="14" height="14" viewBox="0 0 14 14"><path d="M6.500 1.800 H4 A2.800 2.800 0 0 0 1.200 4.600 V10 A2.800 2.800 0 0 0 4 12.800 H9.400 A2.800 2.800 0 0 0 12.200 10 V7.500" fill="none" stroke="#dc2f2f" stroke-width="1.200" stroke-linecap="round"/><path d="M6.500 7.500 L12.600 1.400 M8.800 1.200 H12.800 V5.200" fill="none" stroke="#dc2f2f" stroke-width="1.200" stroke-linecap="round" stroke-linejoin="round"/></svg>
<!-- ================= MAIN ================= -->
<div class="a" style="left:195px;top:169px;width:1155px;height:514px;background:#f3f4f8;border-top-left-radius:20px;border-top-right-radius:14px"></div>
<!-- breadcrumb -->
<div class="t" style="left:207px;top:182px;font-size:10.500px;line-height:12px;color:#9aa1b5;letter-spacing:0.246px">Home</div>
<svg style="left:246px;top:184px" width="5" height="8" viewBox="0 0 5 8"><path d="M0.800 0.800 L4 4 L0.800 7.200" fill="none" stroke="#4b5563" stroke-width="1.100" stroke-linecap="round" stroke-linejoin="round"/></svg>
<div class="t" style="left:262px;top:182px;font-size:10.500px;line-height:12px;font-weight:bold;color:#14877c;letter-spacing:0.190px">Ticket Management</div>

<!-- cards container -->
<div class="a" style="left:207px;top:208px;width:1132px;height:86px;background:#fff;border-radius:8px"></div>
<!-- card 1 -->
<div class="a" style="left:215px;top:216px;width:274px;height:70px;border:1px solid #d9e9f8;border-radius:9px;background:#fff"></div>
<div class="a" style="left:228px;top:229px;width:28px;height:27px;border-radius:5px;background:#3498db"></div>
<svg style="left:235px;top:235px" width="14" height="15" viewBox="0 0 14 15"><path d="M4.600 4.200 C4.600 0.900 9.400 0.900 9.400 4.200" fill="none" stroke="#fff" stroke-width="1.200"/><path d="M2.600 4.600 H11.400 A1.600 1.600 0 0 1 13 6.200 V7.200 A1.500 1.500 0 0 0 13 10.200 V11.400 A1.600 1.600 0 0 1 11.400 13 H2.600 A1.600 1.600 0 0 1 1 11.400 V10.200 A1.500 1.500 0 0 0 1 7.200 V6.200 A1.600 1.600 0 0 1 2.600 4.600 Z" fill="none" stroke="#fff" stroke-width="1.200"/><path d="M7 6.500 V11.200 M5.500 8.800 H8.500" stroke="#fff" stroke-width="1.100"/></svg>
<div class="t" style="left:262.500px;top:230px;font-size:11px;line-height:13px;color:#4a5468;letter-spacing:0.066px">Open Tickets</div>
<div class="t" style="left:262px;top:250.500px;font-size:19.500px;line-height:21px;font-weight:bold;color:#0b1324;letter-spacing:0.398px">25</div>
<div class="a" style="left:406px;top:251px;width:70px;height:20px;border:1px solid #e02424;border-radius:4px;background:#fde6e6;overflow:hidden"><div class="a" style="right:0;top:0;width:18.500px;height:18px;background:#d42a2e"></div></div>
<div class="t" style="left:414px;top:256px;font-size:9.300px;line-height:10px;color:#6b5560;letter-spacing:0.083px">7 Critical</div>
<svg style="left:462px;top:255px" width="9" height="12" viewBox="0 0 9 12"><path d="M4.200 0.800 C4.800 2.600 7.800 4.600 7.800 7.400 A3.300 3.300 0 0 1 1.200 7.400 C1.200 6 2 5 2.600 4.400 C2.800 5.200 3.300 5.700 3.800 5.900 C3.400 4.200 3.500 2.200 4.200 0.800 Z" fill="none" stroke="#fff" stroke-width="1" stroke-linejoin="round"/></svg>
<!-- card 2 -->
<div class="a" style="left:496px;top:216px;width:274px;height:70px;border:1px solid #d9e9f8;border-radius:9px;background:#fff"></div>
<div class="a" style="left:509px;top:229px;width:28px;height:27px;border-radius:5px;background:#f1b20c"></div>
<svg style="left:516px;top:236px" width="14" height="14" viewBox="0 0 14 14"><circle cx="7" cy="7" r="5.800" fill="none" stroke="#fff" stroke-width="1.200"/><path d="M4.400 7.200 L6.200 9 L9.700 5.300" fill="none" stroke="#fff" stroke-width="1.200" stroke-linecap="round" stroke-linejoin="round"/></svg>
<div class="t" style="left:543.500px;top:230px;font-size:11px;line-height:13px;color:#4a5468;letter-spacing:0.122px">Assigned Tickets</div>
<div class="t" style="left:543px;top:250.500px;font-size:19.500px;line-height:21px;font-weight:bold;color:#0b1324;letter-spacing:0.148px">27</div>
<div class="a" style="left:683px;top:251px;width:74px;height:20px;border:1px solid #e02424;border-radius:4px;background:#fde6e6;overflow:hidden"><div class="a" style="right:0;top:0;width:18.500px;height:18px;background:#d42a2e"></div></div>
<div class="t" style="left:691px;top:256px;font-size:9.300px;line-height:10px;color:#6b5560;letter-spacing:-0.077px">17 Critical</div>
<svg style="left:743px;top:255px" width="9" height="12" viewBox="0 0 9 12"><path d="M4.200 0.800 C4.800 2.600 7.800 4.600 7.800 7.400 A3.300 3.300 0 0 1 1.200 7.400 C1.200 6 2 5 2.600 4.400 C2.800 5.200 3.300 5.700 3.800 5.900 C3.400 4.200 3.500 2.200 4.200 0.800 Z" fill="none" stroke="#fff" stroke-width="1" stroke-linejoin="round"/></svg>
<!-- card 3 -->
<div class="a" style="left:777px;top:216px;width:273px;height:70px;border:1px solid #d9e9f8;border-radius:9px;background:#fff"></div>
<div class="a" style="left:790px;top:229px;width:28px;height:27px;border-radius:5px;background:#e67e22"></div>
<svg style="left:798px;top:236px" width="12" height="14" viewBox="0 0 12 14"><path d="M2 1 H10 A.8 .8 0 0 1 10.800 1.800 C10.800 4.400 8.400 5.600 7.400 7 C8.400 8.400 10.800 9.600 10.800 12.200 A.8 .8 0 0 1 10 13 H2 A.8 .8 0 0 1 1.200 12.200 C1.200 9.600 3.600 8.400 4.600 7 C3.600 5.600 1.200 4.400 1.200 1.800 A.8 .8 0 0 1 2 1 Z" fill="none" stroke="#fff" stroke-width="1.200" stroke-linejoin="round"/></svg>
<div class="t" style="left:824.500px;top:230px;font-size:11px;line-height:13px;color:#4a5468;letter-spacing:0.024px">In Progress Tickets</div>
<div class="t" style="left:824px;top:250.500px;font-size:19.500px;line-height:21px;font-weight:bold;color:#0b1324;letter-spacing:0.141px">5</div>
<div class="a" style="left:967px;top:251px;width:71px;height:20px;border:1px solid #e02424;border-radius:4px;background:#fde6e6;overflow:hidden"><div class="a" style="right:0;top:0;width:18.500px;height:18px;background:#d42a2e"></div></div>
<div class="t" style="left:975px;top:256px;font-size:9.300px;line-height:10px;color:#6b5560;letter-spacing:0.133px">2 Critical</div>
<svg style="left:1024px;top:255px" width="9" height="12" viewBox="0 0 9 12"><path d="M4.200 0.800 C4.800 2.600 7.800 4.600 7.800 7.400 A3.300 3.300 0 0 1 1.200 7.400 C1.200 6 2 5 2.600 4.400 C2.800 5.200 3.300 5.700 3.800 5.900 C3.400 4.200 3.500 2.200 4.200 0.800 Z" fill="none" stroke="#fff" stroke-width="1" stroke-linejoin="round"/></svg>
<!-- card 4 -->
<div class="a" style="left:1057px;top:216px;width:274px;height:70px;border:1px solid #d9e9f8;border-radius:9px;background:#fff"></div>
<div class="a" style="left:1070px;top:229px;width:29px;height:27px;border-radius:5px;background:#9498a1"></div>
<svg style="left:1077px;top:237px" width="15" height="12" viewBox="0 0 15 12"><path d="M2.400 1 H12.600 A1.400 1.400 0 0 1 14 2.400 V3.600 A2 2 0 0 0 14 7.600 V9.600 A1.400 1.400 0 0 1 12.600 11 H2.400 A1.400 1.400 0 0 1 1 9.600 V7.600 A2 2 0 0 0 1 3.600 V2.400 A1.400 1.400 0 0 1 2.400 1 Z" fill="none" stroke="#fff" stroke-width="1.200"/><path d="M5.200 3.200 V8.800 M8 3.200 V8.800 M5.200 6 H8" stroke="#fff" stroke-width="1"/></svg>
<div class="t" style="left:1105.500px;top:230px;font-size:11px;line-height:13px;color:#4a5468;letter-spacing:0.105px">Closed Tickets</div>
<div class="t" style="left:1105px;top:250.500px;font-size:19.500px;line-height:21px;font-weight:bold;color:#0b1324;letter-spacing:0.141px">6</div>
<div class="a" style="left:1248px;top:251px;width:70px;height:20px;border:1px solid #e02424;border-radius:4px;background:#fde6e6;overflow:hidden"><div class="a" style="right:0;top:0;width:18.500px;height:18px;background:#d42a2e"></div></div>
<div class="t" style="left:1255px;top:256px;font-size:9.300px;line-height:10px;color:#6b5560;letter-spacing:0.183px">6 Critical</div>
<svg style="left:1304px;top:255px" width="9" height="12" viewBox="0 0 9 12"><path d="M4.200 0.800 C4.800 2.600 7.800 4.600 7.800 7.400 A3.300 3.300 0 0 1 1.200 7.400 C1.200 6 2 5 2.600 4.400 C2.800 5.200 3.300 5.700 3.800 5.900 C3.400 4.200 3.500 2.200 4.200 0.800 Z" fill="none" stroke="#fff" stroke-width="1" stroke-linejoin="round"/></svg>

<!-- table container -->
<div class="a" style="left:207px;top:303px;width:1132px;height:380px;background:#fff;border-radius:8px 8px 0 0"></div>
<!-- search ticket -->
<div class="a" style="left:216px;top:312px;width:184px;height:29px;border:1px solid #dde2ec;border-radius:5px;background:#fff"></div>
<svg style="left:226.500px;top:320px" width="11" height="11" viewBox="0 0 11 11"><circle cx="4.600" cy="4.600" r="3.600" fill="none" stroke="#8a91a8" stroke-width="1"/><path d="M7.300 7.300 L10.200 10.200" stroke="#8a91a8" stroke-width="1" stroke-linecap="round"/></svg>
<div class="t" style="left:247px;top:320px;font-size:10.500px;line-height:12px;color:#8b93a8;letter-spacing:0.260px">Search Ticket</div>
<!-- ================= TOOLBAR BUTTONS ================= -->
<div class="a" style="left:902px;top:312px;width:32px;height:29px;border:1px solid #dce1eb;border-radius:4px;background:#fff"></div>
<div class="a" style="left:940px;top:312px;width:32px;height:29px;border:1px solid #dce1eb;border-radius:4px;background:#fff"></div>
<div class="a" style="left:978px;top:312px;width:32px;height:29px;border:1px solid #dce1eb;border-radius:4px;background:#fff"></div>
<div class="a" style="left:1016px;top:312px;width:32px;height:29px;border:1px solid #dce1eb;border-radius:4px;background:#fff"></div>
<svg style="left:913px;top:319px" width="11" height="14" viewBox="0 0 11 14"><path d="M5.200 0.800 C5.800 3 9.800 5.200 9.800 8.600 A4.300 4.300 0 0 1 1.200 8.600 C1.200 6.800 2.200 5.600 3 4.800 C3.200 5.900 3.900 6.600 4.600 6.800 C4.100 4.800 4.300 2.400 5.200 0.800 Z" fill="none" stroke="#dc2626" stroke-width="1.100" stroke-linejoin="round"/></svg>
<svg style="left:950px;top:320px" width="13" height="12" viewBox="0 0 13 12"><path d="M6.500 1 L12.200 11 H0.800 Z" fill="none" stroke="#ea580c" stroke-width="1.100" stroke-linejoin="round"/><path d="M6.500 4.600 V7.600" stroke="#ea580c" stroke-width="1.100" stroke-linecap="round"/><circle cx="6.500" cy="9.200" r=".6" fill="#ea580c"/></svg>
<svg style="left:988px;top:320px" width="13" height="13" viewBox="0 0 13 13"><circle cx="6.500" cy="6.500" r="5.500" fill="none" stroke="#f0b020" stroke-width="1.100"/><path d="M6.500 3.600 V6.800 L8 8.200" fill="none" stroke="#f0b020" stroke-width="1.100" stroke-linecap="round"/></svg>
<svg style="left:1027px;top:320px" width="10" height="14" viewBox="0 0 10 14"><path d="M2.500 1.200 H7.500 M2.500 3.400 H7.500 M2.500 5.600 H7.500" stroke="#16a34a" stroke-width="1.300"/><path d="M2.500 7.800 H7.500 V8.600 H9.600 L5 13 L0.400 8.600 H2.500 Z" fill="#16a34a"/></svg>
<div class="a" style="left:1054px;top:312px;width:62px;height:29px;border:1px solid #dce1eb;border-radius:6px;background:#fff"></div>
<div class="t" style="left:1064.500px;top:320px;font-size:9.800px;line-height:12px;color:#1f2a44;letter-spacing:-0.214px">Status</div>
<svg style="left:1095px;top:323px" width="10" height="6" viewBox="0 0 10 6"><path d="M0.800 0.800 L5 5 L9.200 0.800" fill="none" stroke="#3b4460" stroke-width="1.100" stroke-linecap="round" stroke-linejoin="round"/></svg>
<div class="a" style="left:1122px;top:312px;width:72px;height:29px;border:1px solid #dce1eb;border-radius:6px;background:#fff"></div>
<svg style="left:1132px;top:319px" width="15" height="14" viewBox="0 0 15 14"><path d="M1 1 H13 L8.600 6.400 V11 L6 13 V6.400 Z" fill="none" stroke="#5a6275" stroke-width="1.100" stroke-linejoin="round"/><path d="M10.800 7.200 V10.400 M9.200 8.800 H12.400" stroke="#5a6275" stroke-width="1" stroke-linecap="round"/></svg>
<div class="t" style="left:1153.500px;top:320px;font-size:11px;line-height:12px;color:#5a6275;letter-spacing:0.007px">Filters</div>
<div class="a" style="left:1200px;top:312px;width:98px;height:29px;border-radius:6px;background:#047c70"></div>
<div class="t" style="left:1218.500px;top:320px;font-size:11px;line-height:12px;font-weight:bold;color:#fff;letter-spacing:-0.293px">Raise Ticket</div>
<div class="a" style="left:1304px;top:312px;width:26px;height:25px;border:1px solid #dce1eb;border-radius:5px;background:#fff"></div>
<svg style="left:1310px;top:318px" width="13" height="14" viewBox="0 0 13 14"><path d="M11.400 7.600 A5 5 0 1 1 9.200 3.400" fill="none" stroke="#6b7280" stroke-width="1.100" stroke-linecap="round"/><path d="M7.200 0.800 L9.600 3.200 L7.200 5.600" fill="none" stroke="#6b7280" stroke-width="1.100" stroke-linecap="round" stroke-linejoin="round"/></svg>
<!-- ================= TABLE ================= -->
<div class="a" style="left:216px;top:350px;width:1104px;height:33.500px;background:#f1f4f9"></div>
<div class="t th" style="left:226.5px;letter-spacing:0.044px">TICKET CODE</div>
<div class="t th" style="left:329px;letter-spacing:0.135px">TICKET NAME</div>
<div class="t th" style="left:433px;letter-spacing:-0.031px">ASSIGNED TO</div>
<div class="t th" style="left:546px;letter-spacing:0.049px">STATUS</div>
<div class="t th" style="left:650.5px;letter-spacing:0.067px">DEPARTMENT</div>
<div class="t th" style="left:788.5px;letter-spacing:-0.115px">PRIORITY</div>
<div class="t th" style="left:882.5px;letter-spacing:0.160px">LOCATION</div>
<div class="t th" style="left:972px;letter-spacing:0.009px">MACHINE</div>
<div class="t th" style="left:1073.5px;letter-spacing:-0.018px">FAULT CATEGORY</div>
<div class="t th" style="left:1212px;letter-spacing:0.027px">TICKET DESCRIPTION</div>
<svg style="left:304.5px;top:363px" width="10" height="7" viewBox="0 0 10 7"><path d="M5 0.200 V6.800" stroke="#9aa2b8" stroke-width=".9"/><path d="M3 2 L0.800 3.500 L3 5 Z M7 2 L9.200 3.500 L7 5 Z" fill="#9aa2b8"/></svg>
<svg style="left:408.0px;top:363px" width="10" height="7" viewBox="0 0 10 7"><path d="M5 0.200 V6.800" stroke="#9aa2b8" stroke-width=".9"/><path d="M3 2 L0.800 3.500 L3 5 Z M7 2 L9.200 3.500 L7 5 Z" fill="#9aa2b8"/></svg>
<svg style="left:521.0px;top:363px" width="10" height="7" viewBox="0 0 10 7"><path d="M5 0.200 V6.800" stroke="#9aa2b8" stroke-width=".9"/><path d="M3 2 L0.800 3.500 L3 5 Z M7 2 L9.200 3.500 L7 5 Z" fill="#9aa2b8"/></svg>
<svg style="left:626.0px;top:363px" width="10" height="7" viewBox="0 0 10 7"><path d="M5 0.200 V6.800" stroke="#9aa2b8" stroke-width=".9"/><path d="M3 2 L0.800 3.500 L3 5 Z M7 2 L9.200 3.500 L7 5 Z" fill="#9aa2b8"/></svg>
<svg style="left:764.0px;top:363px" width="10" height="7" viewBox="0 0 10 7"><path d="M5 0.200 V6.800" stroke="#9aa2b8" stroke-width=".9"/><path d="M3 2 L0.800 3.500 L3 5 Z M7 2 L9.200 3.500 L7 5 Z" fill="#9aa2b8"/></svg>
<svg style="left:858.5px;top:363px" width="10" height="7" viewBox="0 0 10 7"><path d="M5 0.200 V6.800" stroke="#9aa2b8" stroke-width=".9"/><path d="M3 2 L0.800 3.500 L3 5 Z M7 2 L9.200 3.500 L7 5 Z" fill="#9aa2b8"/></svg>
<svg style="left:946.5px;top:363px" width="10" height="7" viewBox="0 0 10 7"><path d="M5 0.200 V6.800" stroke="#9aa2b8" stroke-width=".9"/><path d="M3 2 L0.800 3.500 L3 5 Z M7 2 L9.200 3.500 L7 5 Z" fill="#9aa2b8"/></svg>
<svg style="left:1049.0px;top:363px" width="10" height="7" viewBox="0 0 10 7"><path d="M5 0.200 V6.800" stroke="#9aa2b8" stroke-width=".9"/><path d="M3 2 L0.800 3.500 L3 5 Z M7 2 L9.200 3.500 L7 5 Z" fill="#9aa2b8"/></svg>
<svg style="left:1186.5px;top:363px" width="10" height="7" viewBox="0 0 10 7"><path d="M5 0.200 V6.800" stroke="#9aa2b8" stroke-width=".9"/><path d="M3 2 L0.800 3.500 L3 5 Z M7 2 L9.200 3.500 L7 5 Z" fill="#9aa2b8"/></svg>
<div class="a" style="left:216px;top:429.5px;width:1104px;height:1px;background:#e9ecf3"></div>
<div class="t td" style="left:228px;top:400.2px;color:#0a7c6e;text-decoration:underline;letter-spacing:0.460px">TK-0067</div>
<div class="t td" style="left:330.500px;top:400.2px;color:#5f6880;letter-spacing:0.377px">Test 24</div>
<div class="t td" style="left:434px;top:400.2px;color:#5f6880;letter-spacing:0.180px">Rakshit Shanbhag</div>
<div class="a" style="left:547px;top:395.9px;width:68px;height:21.600px;border:1px solid #f0b429;border-radius:3px;background:#fff"></div>
<svg style="left:557px;top:404.1px" width="6" height="6" viewBox="0 0 6 6"><circle cx="3" cy="3" r="2.750" fill="#f0b429"/></svg>
<div class="t" style="left:566px;top:401.9px;font-size:9.300px;line-height:10px;color:#e8a817;letter-spacing:0.094px">Assigned</div>
<div class="t td" style="left:652.500px;top:400.2px;color:#5f6880;letter-spacing:0.216px">test</div>
<div class="a" style="left:790px;top:396.9px;width:54px;height:20px;border-radius:3px;background:#d9f8e7"></div>
<svg style="left:802px;top:401.8px" width="9" height="12" viewBox="0 0 10 14"><path d="M2.500 1.200 H7.500 M2.500 3.400 H7.500 M2.500 5.600 H7.500" stroke="#15803d" stroke-width="1.400"/><path d="M2.500 7.800 H7.500 V8.600 H9.600 L5 13 L0.400 8.600 H2.500 Z" fill="#15803d"/></svg>
<div class="t" style="left:817.500px;top:401.9px;font-size:9.300px;line-height:10px;color:#15803d;letter-spacing:-0.021px">Low</div>
<div class="t td" style="left:885px;top:400.2px;color:#5f6880;letter-spacing:0.248px">Bomma Auto</div>
<div class="t td" style="left:973.500px;top:400.2px;color:#5f6880;letter-spacing:0.373px">VMC236</div>
<div class="t td" style="left:1075px;top:400.2px;color:#5f6880;letter-spacing:0.131px">Fault</div>
<div class="t td" style="left:1213px;top:400.2px;color:#5f6880">Tes</div>
<div class="a" style="left:216px;top:430.0px;width:1104px;height:46.5px;background:#f9fafb"></div>
<div class="a" style="left:216px;top:476.0px;width:1104px;height:1px;background:#e9ecf3"></div>
<div class="t td" style="left:228px;top:446.8px;color:#0a7c6e;text-decoration:underline;letter-spacing:0.460px">TK-0066</div>
<div class="t td" style="left:330.500px;top:446.8px;color:#39425c;letter-spacing:0.377px">ticket2</div>
<div class="t td" style="left:434px;top:446.8px;color:#39425c;letter-spacing:0.295px">Unassigned</div>
<div class="a" style="left:547px;top:442.4px;width:52px;height:21.600px;border:1px solid #2e86de;border-radius:3px;background:#fff"></div>
<svg style="left:557px;top:450.6px" width="6" height="6" viewBox="0 0 6 6"><circle cx="3" cy="3" r="2.750" fill="#2e86de"/></svg>
<div class="t" style="left:566px;top:448.4px;font-size:9.300px;line-height:10px;color:#2e86de;letter-spacing:-0.062px">Open</div>
<div class="t td" style="left:652.500px;top:446.8px;color:#39425c;letter-spacing:0.130px">Quality</div>
<div class="a" style="left:790px;top:443.4px;width:56px;height:20px;border-radius:3px;background:#fde9dd"></div>
<svg style="left:801px;top:447.9px" width="11.500" height="10.600" viewBox="0 0 13 12"><path d="M6.500 1 L12.200 11 H0.800 Z" fill="none" stroke="#e8590c" stroke-width="1.200" stroke-linejoin="round"/><path d="M6.500 4.600 V7.600" stroke="#e8590c" stroke-width="1.200" stroke-linecap="round"/><circle cx="6.500" cy="9.200" r=".7" fill="#e8590c"/></svg>
<div class="t" style="left:817.500px;top:448.4px;font-size:9.300px;line-height:10px;color:#e8590c;letter-spacing:-0.031px">High</div>
<div class="t td" style="left:885px;top:446.8px;color:#39425c;letter-spacing:0.240px">Booma Aero</div>
<div class="t td" style="left:973.500px;top:446.8px;color:#39425c;letter-spacing:-0.167px">Hurco_VMC181</div>
<div class="t td" style="left:1075px;top:446.8px;color:#39425c;letter-spacing:0.131px">Fault</div>
<div class="t td" style="left:1213px;top:446.8px;color:#39425c">Bug</div>
<div class="a" style="left:216px;top:522.5px;width:1104px;height:1px;background:#e9ecf3"></div>
<div class="t td" style="left:228px;top:493.2px;color:#0a7c6e;text-decoration:underline;letter-spacing:0.460px">TK-0065</div>
<div class="t td" style="left:330.500px;top:493.2px;color:#5f6880;letter-spacing:0.391px">new ticket</div>
<div class="t td" style="left:434px;top:493.2px;color:#5f6880;letter-spacing:0.295px">Unassigned</div>
<div class="a" style="left:547px;top:488.9px;width:52px;height:21.600px;border:1px solid #2e86de;border-radius:3px;background:#fff"></div>
<svg style="left:557px;top:497.1px" width="6" height="6" viewBox="0 0 6 6"><circle cx="3" cy="3" r="2.750" fill="#2e86de"/></svg>
<div class="t" style="left:566px;top:494.9px;font-size:9.300px;line-height:10px;color:#2e86de;letter-spacing:-0.062px">Open</div>
<div class="t td" style="left:652.500px;top:493.2px;color:#5f6880;letter-spacing:0.130px">Quality</div>
<div class="a" style="left:790px;top:489.9px;width:56px;height:20px;border-radius:3px;background:#fde9dd"></div>
<svg style="left:801px;top:494.4px" width="11.500" height="10.600" viewBox="0 0 13 12"><path d="M6.500 1 L12.200 11 H0.800 Z" fill="none" stroke="#e8590c" stroke-width="1.200" stroke-linejoin="round"/><path d="M6.500 4.600 V7.600" stroke="#e8590c" stroke-width="1.200" stroke-linecap="round"/><circle cx="6.500" cy="9.200" r=".7" fill="#e8590c"/></svg>
<div class="t" style="left:817.500px;top:494.9px;font-size:9.300px;line-height:10px;color:#e8590c;letter-spacing:-0.031px">High</div>
<div class="t td" style="left:885px;top:493.2px;color:#5f6880;letter-spacing:0.240px">Booma Aero</div>
<div class="t td" style="left:973.500px;top:493.2px;color:#5f6880;letter-spacing:0.200px">Hurco_VMC203</div>
<div class="t td" style="left:1075px;top:493.2px;color:#5f6880;letter-spacing:0.131px">Fault</div>
<div class="t td" style="left:1213px;top:493.2px;color:#5f6880">test</div>
<div class="a" style="left:216px;top:569.0px;width:1104px;height:1px;background:#e9ecf3"></div>
<div class="t td" style="left:228px;top:539.8px;color:#0a7c6e;text-decoration:underline;letter-spacing:0.460px">TK-0064</div>
<div class="t td" style="left:330.500px;top:539.8px;color:#5f6880;letter-spacing:0.585px">2345</div>
<div class="t td" style="left:434px;top:539.8px;color:#5f6880;letter-spacing:0.295px">Unassigned</div>
<div class="a" style="left:547px;top:535.5px;width:52px;height:21.600px;border:1px solid #2e86de;border-radius:3px;background:#fff"></div>
<svg style="left:557px;top:543.5px" width="6" height="6" viewBox="0 0 6 6"><circle cx="3" cy="3" r="2.750" fill="#2e86de"/></svg>
<div class="t" style="left:566px;top:541.5px;font-size:9.300px;line-height:10px;color:#2e86de;letter-spacing:-0.062px">Open</div>
<div class="t td" style="left:652.500px;top:539.8px;color:#5f6880;letter-spacing:0.297px">Test 2</div>
<div class="a" style="left:790px;top:536.4px;width:70px;height:20px;border-radius:3px;background:#fff4d9"></div>
<svg style="left:801px;top:541.0px" width="11" height="11" viewBox="0 0 13 13"><circle cx="6.500" cy="6.500" r="5.500" fill="none" stroke="#f0a500" stroke-width="1.200"/><path d="M6.500 3.600 V6.800 L8 8.200" fill="none" stroke="#f0a500" stroke-width="1.200" stroke-linecap="round"/></svg>
<div class="t" style="left:817.500px;top:541.5px;font-size:9.300px;line-height:10px;color:#f0a500;letter-spacing:0.070px">Medium</div>
<div class="t td" style="left:885px;top:539.8px;color:#5f6880;letter-spacing:0.240px">Booma Aero</div>
<div class="t td" style="left:973.500px;top:539.8px;color:#5f6880;letter-spacing:0.008px">Hurco_VMC184</div>
<div class="t td" style="left:1075px;top:539.8px;color:#5f6880;letter-spacing:0.131px">Fault</div>
<div class="t td" style="left:1213px;top:539.8px;color:#5f6880">dfgh</div>
<div class="a" style="left:216px;top:615.5px;width:1104px;height:1px;background:#e9ecf3"></div>
<div class="t td" style="left:228px;top:586.2px;color:#0a7c6e;text-decoration:underline;letter-spacing:0.460px">TK-0063</div>
<div class="t td" style="left:330.500px;top:586.2px;color:#5f6880;letter-spacing:0.078px">test123</div>
<div class="t td" style="left:434px;top:586.2px;color:#5f6880;letter-spacing:0.295px">Unassigned</div>
<div class="a" style="left:547px;top:582.0px;width:52px;height:21.600px;border:1px solid #2e86de;border-radius:3px;background:#fff"></div>
<svg style="left:557px;top:590.0px" width="6" height="6" viewBox="0 0 6 6"><circle cx="3" cy="3" r="2.750" fill="#2e86de"/></svg>
<div class="t" style="left:566px;top:588.0px;font-size:9.300px;line-height:10px;color:#2e86de;letter-spacing:-0.062px">Open</div>
<div class="t td" style="left:652.500px;top:586.2px;color:#5f6880;letter-spacing:0.031px">Test 1</div>
<div class="a" style="left:790px;top:582.9px;width:70px;height:20px;border-radius:3px;background:#fff4d9"></div>
<svg style="left:801px;top:587.5px" width="11" height="11" viewBox="0 0 13 13"><circle cx="6.500" cy="6.500" r="5.500" fill="none" stroke="#f0a500" stroke-width="1.200"/><path d="M6.500 3.600 V6.800 L8 8.200" fill="none" stroke="#f0a500" stroke-width="1.200" stroke-linecap="round"/></svg>
<div class="t" style="left:817.500px;top:588.0px;font-size:9.300px;line-height:10px;color:#f0a500;letter-spacing:0.070px">Medium</div>
<div class="t td" style="left:885px;top:586.2px;color:#5f6880;letter-spacing:0.240px">Booma Aero</div>
<div class="t td" style="left:973.500px;top:586.2px;color:#5f6880;letter-spacing:0.008px">Hurco_VMC199</div>
<div class="t td" style="left:1075px;top:586.2px;color:#5f6880;letter-spacing:0.131px">Fault</div>
<div class="t td" style="left:1213px;top:586.2px;color:#5f6880">rftgy</div>
<div class="a" style="left:216px;top:662.0px;width:1104px;height:1px;background:#e9ecf3"></div>
<div class="t td" style="left:228px;top:632.8px;color:#0a7c6e;text-decoration:underline;letter-spacing:0.460px">TK-0062</div>
<div class="t td" style="left:330.500px;top:632.8px;color:#5f6880;letter-spacing:0.414px">ticket</div>
<div class="t td" style="left:434px;top:632.8px;color:#5f6880;letter-spacing:0.269px">test user</div>
<div class="a" style="left:547px;top:628.5px;width:68px;height:21.600px;border:1px solid #f0b429;border-radius:3px;background:#fff"></div>
<svg style="left:557px;top:636.5px" width="6" height="6" viewBox="0 0 6 6"><circle cx="3" cy="3" r="2.750" fill="#f0b429"/></svg>
<div class="t" style="left:566px;top:634.5px;font-size:9.300px;line-height:10px;color:#e8a817;letter-spacing:0.094px">Assigned</div>
<div class="t td" style="left:652.500px;top:632.8px;color:#5f6880;letter-spacing:0.216px">test</div>
<div class="a" style="left:790px;top:629.4px;width:56px;height:20px;border-radius:3px;background:#fde9dd"></div>
<svg style="left:801px;top:634.0px" width="11.500" height="10.600" viewBox="0 0 13 12"><path d="M6.500 1 L12.200 11 H0.800 Z" fill="none" stroke="#e8590c" stroke-width="1.200" stroke-linejoin="round"/><path d="M6.500 4.600 V7.600" stroke="#e8590c" stroke-width="1.200" stroke-linecap="round"/><circle cx="6.500" cy="9.200" r=".7" fill="#e8590c"/></svg>
<div class="t" style="left:817.500px;top:634.5px;font-size:9.300px;line-height:10px;color:#e8590c;letter-spacing:-0.031px">High</div>
<div class="t td" style="left:885px;top:632.8px;color:#5f6880;letter-spacing:0.240px">Booma Aero</div>
<div class="t td" style="left:973.500px;top:632.8px;color:#5f6880;letter-spacing:0.200px">Hurco_VMC203</div>
<div class="t td" style="left:1075px;top:632.8px;color:#5f6880;letter-spacing:0.131px">Fault</div>
<div class="t td" style="left:1213px;top:632.8px;color:#5f6880">tst</div>
<div class="a" style="left:216px;top:708.5px;width:1104px;height:1px;background:#e9ecf3"></div>
<div class="t td" style="left:228px;top:679.2px;color:#0a7c6e;text-decoration:underline;letter-spacing:0.460px">TK-0061</div>
<div class="t td" style="left:330.500px;top:679.2px;color:#5f6880;letter-spacing:0.331px">ticket new</div>
<div class="t td" style="left:434px;top:679.2px;color:#5f6880;letter-spacing:0.116px">Vaibhav Shah</div>
<div class="a" style="left:547px;top:675.0px;width:77px;height:21.600px;border:1px solid #e67e22;border-radius:3px;background:#fff"></div>
<svg style="left:557px;top:683.0px" width="6" height="6" viewBox="0 0 6 6"><circle cx="3" cy="3" r="2.750" fill="#e67e22"/></svg>
<div class="t" style="left:566px;top:681.0px;font-size:9.300px;line-height:10px;color:#e67e22;letter-spacing:0.041px">In Progress</div>
<div class="t td" style="left:652.500px;top:679.2px;color:#5f6880;letter-spacing:0.130px">Quality</div>
<div class="a" style="left:790px;top:675.9px;width:56px;height:20px;border-radius:3px;background:#fde9dd"></div>
<svg style="left:801px;top:680.5px" width="11.500" height="10.600" viewBox="0 0 13 12"><path d="M6.500 1 L12.200 11 H0.800 Z" fill="none" stroke="#e8590c" stroke-width="1.200" stroke-linejoin="round"/><path d="M6.500 4.600 V7.600" stroke="#e8590c" stroke-width="1.200" stroke-linecap="round"/><circle cx="6.500" cy="9.200" r=".7" fill="#e8590c"/></svg>
<div class="t" style="left:817.500px;top:681.0px;font-size:9.300px;line-height:10px;color:#e8590c;letter-spacing:-0.031px">High</div>
<div class="t td" style="left:885px;top:679.2px;color:#5f6880;letter-spacing:0.240px">Booma Aero</div>
<div class="t td" style="left:973.500px;top:679.2px;color:#5f6880;letter-spacing:0.008px">Hurco_VMC199</div>
<div class="t td" style="left:1075px;top:679.2px;color:#5f6880;letter-spacing:0.131px">Fault</div>
<div class="t td" style="left:1213px;top:679.2px;color:#5f6880">test</div>
<div class="a" style="left:1231px;top:383.500px;width:89px;height:300px;background:#f4f6fa"></div>
<div class="a" style="left:1230px;top:350px;width:90px;height:33.500px;background:#dde3ee"></div>
<div class="t th" style="left:1241px;letter-spacing:0.161px">ACTION</div>
<div class="a" style="left:1231px;top:429.5px;width:89px;height:1px;background:#e6e9f1"></div>
<svg style="left:1270px;top:400.2px" width="13" height="13" viewBox="0 0 13 13"><path d="M5.600 1.800 H3.400 A2.400 2.400 0 0 0 1 4.200 V9.600 A2.400 2.400 0 0 0 3.400 12 H8.800 A2.400 2.400 0 0 0 11.200 9.600 V7.400" fill="none" stroke="#4a8fa8" stroke-width="1.100" stroke-linecap="round"/><path d="M9.400 1.300 A1.300 1.300 0 0 1 11.700 3.600 L6.600 8.700 L4.200 9.100 L4.600 6.700 Z M8.500 2.500 L10.500 4.500" fill="none" stroke="#4a8fa8" stroke-width="1.100" stroke-linejoin="round"/></svg>
<svg style="left:1294.500px;top:399.9px" width="12" height="14" viewBox="0 0 12 14"><path d="M0.800 3 H11.200 M4 2.800 C4 0.400 8 0.400 8 2.800" fill="none" stroke="#d93a3a" stroke-width="1.100" stroke-linecap="round"/><path d="M1.800 3.200 L2.500 11.600 A1.500 1.500 0 0 0 4 13 H8 A1.500 1.500 0 0 0 9.500 11.600 L10.200 3.200" fill="none" stroke="#d93a3a" stroke-width="1.100" stroke-linejoin="round"/><path d="M4.200 6.800 H7.800 M4.800 9.400 H7.200" stroke="#d93a3a" stroke-width="1.100" stroke-linecap="round"/></svg>
<div class="a" style="left:1231px;top:476.0px;width:89px;height:1px;background:#e6e9f1"></div>
<svg style="left:1245.500px;top:448.2px" width="14" height="11" viewBox="0 0 14 11"><circle cx="5" cy="2.900" r="2.300" fill="none" stroke="#f0b429" stroke-width="1.150"/><path d="M0.800 10.200 C0.800 5.800 9.200 5.800 9.200 10.200" fill="none" stroke="#f0b429" stroke-width="1.150" stroke-linecap="round"/><path d="M11.300 3.400 C11.450 5.500 11.900 6 14 6.200 C11.900 6.400 11.450 6.900 11.300 9 C11.150 6.900 10.700 6.400 8.600 6.200 C10.700 6 11.150 5.500 11.300 3.400 Z" fill="#f0b429" stroke="#f0b429" stroke-width=".4" stroke-linejoin="round"/></svg>
<svg style="left:1270px;top:446.8px" width="13" height="13" viewBox="0 0 13 13"><path d="M5.600 1.800 H3.400 A2.400 2.400 0 0 0 1 4.200 V9.600 A2.400 2.400 0 0 0 3.400 12 H8.800 A2.400 2.400 0 0 0 11.200 9.600 V7.400" fill="none" stroke="#4a8fa8" stroke-width="1.100" stroke-linecap="round"/><path d="M9.400 1.300 A1.300 1.300 0 0 1 11.700 3.600 L6.600 8.700 L4.200 9.100 L4.600 6.700 Z M8.500 2.500 L10.500 4.500" fill="none" stroke="#4a8fa8" stroke-width="1.100" stroke-linejoin="round"/></svg>
<svg style="left:1294.500px;top:446.4px" width="12" height="14" viewBox="0 0 12 14"><path d="M0.800 3 H11.200 M4 2.800 C4 0.400 8 0.400 8 2.800" fill="none" stroke="#d93a3a" stroke-width="1.100" stroke-linecap="round"/><path d="M1.800 3.200 L2.500 11.600 A1.500 1.500 0 0 0 4 13 H8 A1.500 1.500 0 0 0 9.500 11.600 L10.200 3.200" fill="none" stroke="#d93a3a" stroke-width="1.100" stroke-linejoin="round"/><path d="M4.200 6.800 H7.800 M4.800 9.400 H7.200" stroke="#d93a3a" stroke-width="1.100" stroke-linecap="round"/></svg>
<div class="a" style="left:1231px;top:522.5px;width:89px;height:1px;background:#e6e9f1"></div>
<svg style="left:1245.500px;top:494.8px" width="14" height="11" viewBox="0 0 14 11"><circle cx="5" cy="2.900" r="2.300" fill="none" stroke="#f0b429" stroke-width="1.150"/><path d="M0.800 10.200 C0.800 5.800 9.200 5.800 9.200 10.200" fill="none" stroke="#f0b429" stroke-width="1.150" stroke-linecap="round"/><path d="M11.300 3.400 C11.450 5.500 11.900 6 14 6.200 C11.900 6.400 11.450 6.900 11.300 9 C11.150 6.900 10.700 6.400 8.600 6.200 C10.700 6 11.150 5.500 11.300 3.400 Z" fill="#f0b429" stroke="#f0b429" stroke-width=".4" stroke-linejoin="round"/></svg>
<svg style="left:1270px;top:493.2px" width="13" height="13" viewBox="0 0 13 13"><path d="M5.600 1.800 H3.400 A2.400 2.400 0 0 0 1 4.200 V9.600 A2.400 2.400 0 0 0 3.400 12 H8.800 A2.400 2.400 0 0 0 11.200 9.600 V7.400" fill="none" stroke="#4a8fa8" stroke-width="1.100" stroke-linecap="round"/><path d="M9.400 1.300 A1.300 1.300 0 0 1 11.700 3.600 L6.600 8.700 L4.200 9.100 L4.600 6.700 Z M8.500 2.500 L10.500 4.500" fill="none" stroke="#4a8fa8" stroke-width="1.100" stroke-linejoin="round"/></svg>
<svg style="left:1294.500px;top:492.9px" width="12" height="14" viewBox="0 0 12 14"><path d="M0.800 3 H11.200 M4 2.800 C4 0.400 8 0.400 8 2.800" fill="none" stroke="#d93a3a" stroke-width="1.100" stroke-linecap="round"/><path d="M1.800 3.200 L2.500 11.600 A1.500 1.500 0 0 0 4 13 H8 A1.500 1.500 0 0 0 9.500 11.600 L10.200 3.200" fill="none" stroke="#d93a3a" stroke-width="1.100" stroke-linejoin="round"/><path d="M4.200 6.800 H7.800 M4.800 9.400 H7.200" stroke="#d93a3a" stroke-width="1.100" stroke-linecap="round"/></svg>
<div class="a" style="left:1231px;top:569.0px;width:89px;height:1px;background:#e6e9f1"></div>
<svg style="left:1245.500px;top:541.2px" width="14" height="11" viewBox="0 0 14 11"><circle cx="5" cy="2.900" r="2.300" fill="none" stroke="#f0b429" stroke-width="1.150"/><path d="M0.800 10.200 C0.800 5.800 9.200 5.800 9.200 10.200" fill="none" stroke="#f0b429" stroke-width="1.150" stroke-linecap="round"/><path d="M11.300 3.400 C11.450 5.500 11.900 6 14 6.200 C11.900 6.400 11.450 6.900 11.300 9 C11.150 6.900 10.700 6.400 8.600 6.200 C10.700 6 11.150 5.500 11.300 3.400 Z" fill="#f0b429" stroke="#f0b429" stroke-width=".4" stroke-linejoin="round"/></svg>
<svg style="left:1270px;top:539.8px" width="13" height="13" viewBox="0 0 13 13"><path d="M5.600 1.800 H3.400 A2.400 2.400 0 0 0 1 4.200 V9.600 A2.400 2.400 0 0 0 3.400 12 H8.800 A2.400 2.400 0 0 0 11.200 9.600 V7.400" fill="none" stroke="#4a8fa8" stroke-width="1.100" stroke-linecap="round"/><path d="M9.400 1.300 A1.300 1.300 0 0 1 11.700 3.600 L6.600 8.700 L4.200 9.100 L4.600 6.700 Z M8.500 2.500 L10.500 4.500" fill="none" stroke="#4a8fa8" stroke-width="1.100" stroke-linejoin="round"/></svg>
<svg style="left:1294.500px;top:539.5px" width="12" height="14" viewBox="0 0 12 14"><path d="M0.800 3 H11.200 M4 2.800 C4 0.400 8 0.400 8 2.800" fill="none" stroke="#d93a3a" stroke-width="1.100" stroke-linecap="round"/><path d="M1.800 3.200 L2.500 11.600 A1.500 1.500 0 0 0 4 13 H8 A1.500 1.500 0 0 0 9.500 11.600 L10.200 3.200" fill="none" stroke="#d93a3a" stroke-width="1.100" stroke-linejoin="round"/><path d="M4.200 6.800 H7.800 M4.800 9.400 H7.200" stroke="#d93a3a" stroke-width="1.100" stroke-linecap="round"/></svg>
<div class="a" style="left:1231px;top:615.5px;width:89px;height:1px;background:#e6e9f1"></div>
<svg style="left:1245.500px;top:587.8px" width="14" height="11" viewBox="0 0 14 11"><circle cx="5" cy="2.900" r="2.300" fill="none" stroke="#f0b429" stroke-width="1.150"/><path d="M0.800 10.200 C0.800 5.800 9.200 5.800 9.200 10.200" fill="none" stroke="#f0b429" stroke-width="1.150" stroke-linecap="round"/><path d="M11.300 3.400 C11.450 5.500 11.900 6 14 6.200 C11.900 6.400 11.450 6.900 11.300 9 C11.150 6.900 10.700 6.400 8.600 6.200 C10.700 6 11.150 5.500 11.300 3.400 Z" fill="#f0b429" stroke="#f0b429" stroke-width=".4" stroke-linejoin="round"/></svg>
<svg style="left:1270px;top:586.2px" width="13" height="13" viewBox="0 0 13 13"><path d="M5.600 1.800 H3.400 A2.400 2.400 0 0 0 1 4.200 V9.600 A2.400 2.400 0 0 0 3.400 12 H8.800 A2.400 2.400 0 0 0 11.200 9.600 V7.400" fill="none" stroke="#4a8fa8" stroke-width="1.100" stroke-linecap="round"/><path d="M9.400 1.300 A1.300 1.300 0 0 1 11.700 3.600 L6.600 8.700 L4.200 9.100 L4.600 6.700 Z M8.500 2.500 L10.500 4.500" fill="none" stroke="#4a8fa8" stroke-width="1.100" stroke-linejoin="round"/></svg>
<svg style="left:1294.500px;top:586.0px" width="12" height="14" viewBox="0 0 12 14"><path d="M0.800 3 H11.200 M4 2.800 C4 0.400 8 0.400 8 2.800" fill="none" stroke="#d93a3a" stroke-width="1.100" stroke-linecap="round"/><path d="M1.800 3.200 L2.500 11.600 A1.500 1.500 0 0 0 4 13 H8 A1.500 1.500 0 0 0 9.500 11.600 L10.200 3.200" fill="none" stroke="#d93a3a" stroke-width="1.100" stroke-linejoin="round"/><path d="M4.200 6.800 H7.800 M4.800 9.400 H7.200" stroke="#d93a3a" stroke-width="1.100" stroke-linecap="round"/></svg>
<div class="a" style="left:1231px;top:662.0px;width:89px;height:1px;background:#e6e9f1"></div>
<svg style="left:1270px;top:632.8px" width="13" height="13" viewBox="0 0 13 13"><path d="M5.600 1.800 H3.400 A2.400 2.400 0 0 0 1 4.200 V9.600 A2.400 2.400 0 0 0 3.400 12 H8.800 A2.400 2.400 0 0 0 11.200 9.600 V7.400" fill="none" stroke="#4a8fa8" stroke-width="1.100" stroke-linecap="round"/><path d="M9.400 1.300 A1.300 1.300 0 0 1 11.700 3.600 L6.600 8.700 L4.200 9.100 L4.600 6.700 Z M8.500 2.500 L10.500 4.500" fill="none" stroke="#4a8fa8" stroke-width="1.100" stroke-linejoin="round"/></svg>
<svg style="left:1294.500px;top:632.5px" width="12" height="14" viewBox="0 0 12 14"><path d="M0.800 3 H11.200 M4 2.800 C4 0.400 8 0.400 8 2.800" fill="none" stroke="#d93a3a" stroke-width="1.100" stroke-linecap="round"/><path d="M1.800 3.200 L2.500 11.600 A1.500 1.500 0 0 0 4 13 H8 A1.500 1.500 0 0 0 9.500 11.600 L10.200 3.200" fill="none" stroke="#d93a3a" stroke-width="1.100" stroke-linejoin="round"/><path d="M4.200 6.800 H7.800 M4.800 9.400 H7.200" stroke="#d93a3a" stroke-width="1.100" stroke-linecap="round"/></svg>
<div class="a" style="left:1231px;top:708.5px;width:89px;height:1px;background:#e6e9f1"></div>
<svg style="left:1270px;top:679.2px" width="13" height="13" viewBox="0 0 13 13"><path d="M5.600 1.800 H3.400 A2.400 2.400 0 0 0 1 4.200 V9.600 A2.400 2.400 0 0 0 3.400 12 H8.800 A2.400 2.400 0 0 0 11.200 9.600 V7.400" fill="none" stroke="#4a8fa8" stroke-width="1.100" stroke-linecap="round"/><path d="M9.400 1.300 A1.300 1.300 0 0 1 11.700 3.600 L6.600 8.700 L4.200 9.100 L4.600 6.700 Z M8.500 2.500 L10.500 4.500" fill="none" stroke="#4a8fa8" stroke-width="1.100" stroke-linejoin="round"/></svg>
<svg style="left:1294.500px;top:679.0px" width="12" height="14" viewBox="0 0 12 14"><path d="M0.800 3 H11.200 M4 2.800 C4 0.400 8 0.400 8 2.800" fill="none" stroke="#d93a3a" stroke-width="1.100" stroke-linecap="round"/><path d="M1.800 3.200 L2.500 11.600 A1.500 1.500 0 0 0 4 13 H8 A1.500 1.500 0 0 0 9.500 11.600 L10.200 3.200" fill="none" stroke="#d93a3a" stroke-width="1.100" stroke-linejoin="round"/><path d="M4.200 6.800 H7.800 M4.800 9.400 H7.200" stroke="#d93a3a" stroke-width="1.100" stroke-linecap="round"/></svg>
<svg style="left:1321px;top:353px" width="8" height="5" viewBox="0 0 8 5"><path d="M0.500 4.500 L4 1 L7.500 4.500 Z" fill="#dfe4ee"/></svg>
<div class="a" style="left:1322px;top:361.500px;width:6px;height:259px;border-radius:3px;background:#dce2ee"></div>
<div class="a" style="left:1210px;top:408px;width:85px;height:29.500px;border-radius:5px;background:#1c2638;box-shadow:0 2px 6px rgba(20,30,50,.25)"></div>
<svg style="left:1247.500px;top:437px" width="10" height="5" viewBox="0 0 10 5"><path d="M0 0 H10 L5 4.600 Z" fill="#1c2638"/></svg>
<div class="t" style="left:1219px;top:415.700px;font-size:10.800px;line-height:12px;font-weight:bold;color:#fff;letter-spacing:-0.232px">Assign Ticket</div>
<!-- ================= FOOTER ================= -->
<div class="a" style="left:195px;top:682.500px;width:1155px;height:45.500px;background:#fff"></div>
<div class="t" style="left:195px;top:698px;font-size:10.500px;line-height:12px;color:#6b7494;letter-spacing:0.255px">Powered by</div>
<svg style="left:260px;top:697px" width="14" height="15" viewBox="0 0 14 15"><g><circle cx="1.200" cy="5" r=".7" fill="#8ab4f8"/><circle cx="1.200" cy="7.500" r=".7" fill="#8ab4f8"/><circle cx="1.200" cy="10" r=".7" fill="#8ab4f8"/><circle cx="3.800" cy="2.800" r=".9" fill="#ea4335"/><circle cx="3.800" cy="5.400" r=".9" fill="#ea4335"/><circle cx="3.800" cy="8" r=".9" fill="#ea4335"/><circle cx="3.800" cy="10.600" r=".9" fill="#ea4335"/><circle cx="3.800" cy="13" r=".8" fill="#f28b82"/><circle cx="6.600" cy="1.400" r=".9" fill="#fbbc04"/><circle cx="6.600" cy="4" r="1" fill="#fbbc04"/><circle cx="6.600" cy="6.600" r="1" fill="#fbbc04"/><circle cx="6.600" cy="9.200" r="1" fill="#fbbc04"/><circle cx="6.600" cy="11.800" r="1" fill="#fbbc04"/><circle cx="6.600" cy="14" r=".8" fill="#fbbc04"/><circle cx="9.400" cy="2.800" r=".9" fill="#34a853"/><circle cx="9.400" cy="5.400" r="1" fill="#34a853"/><circle cx="9.400" cy="8" r="1" fill="#34a853"/><circle cx="9.400" cy="10.600" r="1" fill="#34a853"/><circle cx="9.400" cy="13" r=".8" fill="#34a853"/><circle cx="12.200" cy="4.200" r=".9" fill="#4285f4"/><circle cx="12.200" cy="6.800" r="1" fill="#4285f4"/><circle cx="12.200" cy="9.400" r="1" fill="#4285f4"/><circle cx="12.200" cy="11.800" r=".8" fill="#4285f4"/></g></svg>
<div class="t" style="left:276.500px;top:698.500px;font-size:10.800px;line-height:12px;color:#6b6f76;letter-spacing:-0.436px">Google AI</div>
<div class="t" style="left:581.500px;top:696.800px;font-size:10.500px;line-height:12px;color:#4b5468"><span style="letter-spacing:0.366px">2025 © </span><span style="font-weight:bold;letter-spacing:0.299px">manufex.</span><span style="letter-spacing:0.340px">cloud All rights Reserved. | Privacy Policy</span></div>
<div class="t" style="left:1139.500px;top:696.800px;font-size:10.500px;line-height:12px;color:#5b647c"><span style="letter-spacing:0.257px">Designed &amp; Developed by </span><span style="font-weight:bold;color:#0a7c6e;text-decoration:underline;letter-spacing:0.056px">AeonX Digital</span></div>

<!-- floating assistant button -->
<div class="a" style="left:1285px;top:648px;width:34px;height:34px;border-radius:19px;background:#fff;box-shadow:0 0 14px 8px rgba(255,255,255,.7)"></div>
<div class="a" style="left:1283px;top:648px;width:38px;height:37.500px;border-radius:19px;background:#86bbb0"></div>
<div class="a" style="left:1283px;top:644px;width:38px;height:37.500px;border-radius:19px;background:#fff"></div>
<svg style="left:1283px;top:644px" width="38" height="38" viewBox="0 0 38 38"><ellipse cx="8.1" cy="13.5" rx="1.35" ry="0.95" fill="#4285f4"/><ellipse cx="8.1" cy="18.7" rx="1.35" ry="0.95" fill="#4285f4"/><ellipse cx="8.1" cy="24.0" rx="1.35" ry="0.95" fill="#4285f4"/><ellipse cx="13.3" cy="10.8" rx="1.70" ry="1.40" fill="#ea4335"/><ellipse cx="13.3" cy="16.1" rx="1.70" ry="1.40" fill="#ea4335"/><ellipse cx="13.3" cy="21.5" rx="1.70" ry="1.40" fill="#ea4335"/><ellipse cx="13.3" cy="26.5" rx="1.70" ry="1.40" fill="#ea4335"/><ellipse cx="18.6" cy="8.2" rx="1.75" ry="1.55" fill="#fbbc04"/><ellipse cx="18.6" cy="13.5" rx="1.75" ry="1.55" fill="#fbbc04"/><ellipse cx="18.6" cy="18.7" rx="1.75" ry="1.55" fill="#fbbc04"/><ellipse cx="18.6" cy="24.0" rx="1.75" ry="1.55" fill="#fbbc04"/><ellipse cx="18.6" cy="29.4" rx="1.75" ry="1.55" fill="#fbbc04"/><ellipse cx="23.6" cy="10.8" rx="2.10" ry="1.80" fill="#34a853"/><ellipse cx="23.6" cy="16.1" rx="2.10" ry="1.80" fill="#34a853"/><ellipse cx="23.6" cy="21.5" rx="2.10" ry="1.80" fill="#34a853"/><ellipse cx="23.6" cy="26.5" rx="2.10" ry="1.80" fill="#34a853"/><ellipse cx="28.9" cy="13.5" rx="2.40" ry="2.10" fill="#4285f4"/><ellipse cx="28.9" cy="18.7" rx="2.40" ry="2.10" fill="#4285f4"/><ellipse cx="28.9" cy="24.0" rx="2.40" ry="2.10" fill="#4285f4"/></svg>
<div class="a" style="left:1314px;top:639.500px;width:9px;height:9px;border-radius:5px;background:#10d468"></div>
<!-- ================= PAGE SCROLLBAR ================= -->
<div class="a" style="left:1350px;top:121px;width:16px;height:607px;background:#fcfcfc"></div>
<div class="a" style="left:1351px;top:121px;width:1px;height:607px;background:#f0f0f0"></div>
<svg style="left:1353.500px;top:126px" width="10" height="6" viewBox="0 0 10 6"><path d="M0 5.500 L5 0.500 L10 5.500 Z" fill="#8a8a8a"/></svg>
<div class="a" style="left:1354px;top:139px;width:9px;height:470px;border-radius:4.500px;background:#8b8b8b"></div>
<svg style="left:1353.500px;top:715px" width="10" height="6" viewBox="0 0 10 6"><path d="M0 0.500 L5 5.500 L10 0.500 Z" fill="#8a8a8a"/></svg>
<!-- ================= TASKBAR ================= -->
<div id="taskbar" class="a"></div>
<!-- start -->
<svg style="left:15.700px;top:739.500px" width="16.700" height="16.700" viewBox="0 0 17 17"><path d="M0 2.400 L7.600 1.300 V8 H0 Z M8.600 1.150 L17 0 V8 H8.600 Z M0 9 H7.600 V15.700 L0 14.600 Z M8.600 9 H17 V17 L8.600 15.850 Z" fill="#fff"/></svg>
<!-- search box -->
<div class="a" style="left:48px;top:728px;width:288px;height:40px;background:#f2f2f2;border-top:1px solid #b4b4b4;border-bottom:1px solid #c8c8c8"></div>
<svg style="left:60px;top:739px" width="17" height="17" viewBox="0 0 17 17"><circle cx="10.200" cy="6.600" r="5.300" fill="none" stroke="#222" stroke-width="1.300"/><path d="M6.400 10.600 L1 16" stroke="#222" stroke-width="1.400" stroke-linecap="round"/></svg>
<div class="t" style="left:88px;top:739px;font-size:15px;line-height:18px;color:#2a2a2a;letter-spacing:-0.241px">Type here to search</div>
<!-- sparkles -->
<svg style="left:262px;top:732px" width="66" height="32" viewBox="0 0 66 32"><path d="M26 3.500 C27.600 10 31 13.400 37.500 15.200 C31 17 27.600 20.400 26 27 C24.400 20.400 21 17 14.500 15.200 C21 13.400 24.400 10 26 3.500 Z" fill="#f7b916" stroke="#f7b916" stroke-width="2" stroke-linejoin="round"/><path d="M25.500 7 C26.500 11.500 28.500 13.500 32.500 14.600 C28 15 25 13 25.500 7 Z" fill="#fdd65a"/><path d="M49 13.800 C49.800 17 51.200 18.600 54.500 19.500 C51.200 20.400 49.800 22 49 25.200 C48.200 22 46.800 20.400 43.500 19.500 C46.800 18.600 48.200 17 49 13.800 Z" fill="#f7b916" stroke="#f7b916" stroke-width="1.200" stroke-linejoin="round"/><path d="M7 19.800 C7.600 22.400 8.600 23.400 11.200 24 C8.600 24.600 7.600 25.600 7 28.200 C6.400 25.600 5.400 24.600 2.800 24 C5.400 23.400 6.400 22.400 7 19.800 Z" fill="#2196f3" stroke="#2196f3" stroke-width="1" stroke-linejoin="round" transform="rotate(-15 7 24)"/><circle cx="42.500" cy="6" r="2" fill="#f4511e"/><circle cx="61" cy="25.600" r="2" fill="#7cb342"/></svg>
<!-- task view -->
<svg style="left:352px;top:739.500px" width="17" height="16" viewBox="0 0 17 16"><path d="M0.700 0.700 H11.300 M0.700 15.300 H11.300" stroke="#fff" stroke-width="1.300"/><rect x="1.400" y="3.600" width="9.200" height="8.800" fill="none" stroke="#fff" stroke-width="1.300"/><path d="M14.800 0 V2.600 M14.800 11.500 V16" stroke="#fff" stroke-width="1.300"/><rect x="13.600" y="4.200" width="2.800" height="5.600" fill="#fff"/></svg>
<!-- edge -->
<svg style="left:399px;top:735.500px" width="25" height="25" viewBox="0 0 25 25"><defs><linearGradient id="eg1" x1="0" y1="0" x2="1" y2="1"><stop offset="0" stop-color="#3ec56f"/><stop offset=".5" stop-color="#2fb4c8"/><stop offset="1" stop-color="#1668c9"/></linearGradient></defs><circle cx="12.500" cy="12.500" r="12" fill="url(#eg1)"/><path d="M3 16 C3 9 9 5.500 14 6.500 C19 7.500 21 11 20 14 C19 16 16 16 15.500 14 C15 11.500 12 11 10.500 13 C8.500 16 11 21 16 22 C10 24 3 21 3 16 Z" fill="#0e4fa3" opacity=".85"/><path d="M1 10 C3 3 11 0 18 3 C22 5 24 8.500 24 11 C22 7 17 5 12 6.500 C7 8 4.500 12 5 17 C3 15.500 0.500 13 1 10 Z" fill="#5fd86a" opacity=".9"/><rect x="0.500" y="15" width="11" height="8" rx="1" fill="#f5a623"/><rect x="3.500" y="13.200" width="5" height="2.500" rx=".8" fill="none" stroke="#c47a0e" stroke-width="1"/><rect x="0.500" y="18.200" width="11" height="1.300" fill="#b86f10"/><rect x="5" y="17.500" width="2" height="2.600" fill="#ffd36b"/></svg>
<!-- explorer -->
<svg style="left:449px;top:738px" width="23" height="20" viewBox="0 0 23 20"><path d="M0.500 2 A1.500 1.500 0 0 1 2 0.500 H8 L10 3 H21 A1.500 1.500 0 0 1 22.500 4.500 V18 A1.500 1.500 0 0 1 21 19.500 H2 A1.500 1.500 0 0 1 0.500 18 Z" fill="#f0b429"/><path d="M0.500 6 H22.500 V18 A1.500 1.500 0 0 1 21 19.500 H2 A1.500 1.500 0 0 1 0.500 18 Z" fill="#ffd968"/><path d="M6.500 19.500 V12.500 H16.500 V19.500 H14 V15.500 H9 V19.500 Z" fill="#3a9be8"/><rect x="6.500" y="10.500" width="10" height="2" fill="#2a7fd0"/></svg>
<!-- teams -->
<svg style="left:496px;top:736px" width="28" height="26" viewBox="0 0 28 26"><circle cx="20.500" cy="5" r="3" fill="#5b63c7"/><circle cx="13" cy="4.500" r="4" fill="#7b83eb"/><path d="M17 9 H25 A1.500 1.500 0 0 1 26.500 10.500 V16 A5 5 0 0 1 17 17 Z" fill="#5059c9"/><path d="M7 9 H19 V18 A6 6 0 0 1 7 18 Z" fill="#7b83eb"/><rect x="0.500" y="6.500" width="12" height="12" rx="1.300" fill="#4b53bc"/><path d="M3.500 9.800 H9.500 M6.500 9.800 V15.800" stroke="#fff" stroke-width="1.600"/><circle cx="19" cy="17.500" r="7.200" fill="#c4262e"/><text x="19" y="22" font-family="Liberation Sans, sans-serif" font-size="11.500" fill="#fff" text-anchor="middle">2</text></svg>
<!-- chrome (active) -->
<div class="a" style="left:534px;top:728px;width:48px;height:40px;background:#3d3d3d"></div>
<svg style="left:545.500px;top:735.500px" width="24" height="24" viewBox="0 0 24 24"><circle cx="12" cy="12" r="12" fill="#fff"/><path d="M12 12 L1.610 6 A12 12 0 0 1 22.390 6 Z" fill="#ea4335"/><path d="M12 12 L22.390 6 A12 12 0 0 1 12 24 Z" fill="#fbbc04"/><path d="M12 12 L12 24 A12 12 0 0 1 1.610 6 Z" fill="#34a853"/><path d="M12 6 H22.390 A12 12 0 0 0 1.610 6 L6.800 15 Z" fill="#ea4335"/><path d="M17.200 15 L12 24 A12 12 0 0 0 22.390 6 H12 Z" fill="#fbbc04"/><path d="M6.800 15 L1.610 6 A12 12 0 0 0 12 24 L17.200 15 Z" fill="#34a853"/><circle cx="12" cy="12" r="5.600" fill="#fff"/><circle cx="12" cy="12" r="4.400" fill="#4285f4"/></svg>
<!-- vscode -->
<svg style="left:594px;top:736px" width="25" height="25" viewBox="0 0 25 25"><path d="M18 0.800 L24.200 3.600 V21.400 L18 24.200 L5 13.800 L2.200 16 L0.600 15 V10 L2.200 9 L5 11.200 Z" fill="#1f9cf0"/><path d="M18 0.800 L24.200 3.600 V21.400 L18 24.200 Z" fill="#0065a9"/><path d="M18 6.800 V18.200 L10.500 12.500 Z" fill="#111"/><path d="M0.600 10 L2.200 9 L18 24.200 L14.500 22.600 Z" fill="#007acc"/><path d="M0.600 15 L2.200 16 L18 0.800 L14.500 2.400 Z" fill="#1f9cf0"/></svg>
<!-- pgadmin elephant -->
<svg style="left:643px;top:735px" width="26" height="27" viewBox="0 0 26 27"><path d="M5 3 C8 0 14 0 17 1.500 C21 0.500 25 3 25 9 C25 13 23 17 21 18.500 C21.500 20 23 20 24.500 19.600 C24 21.500 20 22 18.500 20 C18 23 17.500 26 14 26.500 C11 26.500 10.500 24 10.500 21 C10.500 19 10 17 9.500 16 C7 17 4 15 2.500 11 C1 7 2 4.500 5 3 Z" fill="#336791" stroke="#dfe6ee" stroke-width="1.200"/><path d="M17 2 C16 6 17 12 18.500 19" fill="none" stroke="#dfe6ee" stroke-width="1"/><path d="M9.500 16 C11 14.500 11 12 10 9" fill="none" stroke="#dfe6ee" stroke-width="1"/><circle cx="13.500" cy="8" r=".9" fill="#fff"/><circle cx="20.500" cy="8" r=".8" fill="#fff"/></svg>
<!-- snip -->
<svg style="left:694px;top:735px" width="24" height="27" viewBox="0 0 24 27"><circle cx="12" cy="11" r="9" fill="none" stroke="#d23a1f" stroke-width="3"/><path d="M11 1 L14 1 L13.500 15 L11.500 15 Z" fill="#e8e8e8"/><path d="M11.500 14 L8 20 M13 14 L17 20" stroke="#cfcfcf" stroke-width="1.800"/><circle cx="6.500" cy="22" r="2.600" fill="none" stroke="#1e88e5" stroke-width="1.800"/><circle cx="18" cy="22" r="2.600" fill="none" stroke="#1e88e5" stroke-width="1.800"/></svg>
<!-- running underlines -->
<div class="a" style="left:489px;top:765.500px;width:40px;height:3px;background:#7cc0f0"></div>
<div class="a" style="left:534px;top:765.500px;width:48px;height:3px;background:#8ccaf5"></div>
<div class="a" style="left:587px;top:765.500px;width:40px;height:3px;background:#7cc0f0"></div>
<div class="a" style="left:636px;top:765.500px;width:40px;height:3px;background:#7cc0f0"></div>
<div class="a" style="left:685px;top:765.500px;width:40px;height:3px;background:#7cc0f0"></div>
<!-- tray -->
<svg style="left:1098px;top:744px" width="14" height="9" viewBox="0 0 14 9"><path d="M1 7.800 L7 1.500 L13 7.800" fill="none" stroke="#fff" stroke-width="1.300"/></svg>
<svg style="left:1123px;top:741px" width="15" height="15" viewBox="0 0 15 15"><g fill="none" stroke="#9a9a9a" stroke-width="1.200"><path d="M1.500 13.500 A12 12 0 0 1 13.500 1.500"/><path d="M4.800 13.500 A8.700 8.700 0 0 1 13.500 4.800"/></g><g fill="none" stroke="#fff" stroke-width="1.300"><path d="M8.200 13.500 A5.300 5.300 0 0 1 13.500 8.200"/></g><circle cx="12.300" cy="12.300" r="1.700" fill="#fff"/></svg>
<svg style="left:1144px;top:742px" width="18" height="12" viewBox="0 0 18 12"><path d="M4.200 11.500 A3.700 3.700 0 0 1 3.800 4.200 A5 5 0 0 1 13 3.500 A4.100 4.100 0 0 1 14 11.500 Z" fill="#1f8ae0"/><path d="M3.800 4.200 A5 5 0 0 1 13 3.500 L7 8 Z" fill="#1570c4" opacity=".7"/></svg>
<svg style="left:1168px;top:741px" width="18" height="13" viewBox="0 0 18 13"><rect x="5.500" y="3" width="10.500" height="7.500" fill="none" stroke="#fff" stroke-width="1.200"/><rect x="16.400" y="5" width="1.200" height="3.500" fill="#fff"/><rect x="7" y="4.500" width="7.500" height="4.500" fill="#fff"/><path d="M0.500 3.500 H3.600 V7.500 H0.500 M2 1 V3.500 M2 7.500 V10 C2 12 5 12 5.500 10.500" fill="none" stroke="#fff" stroke-width="1.100"/></svg>
<svg style="left:1192px;top:741px" width="17" height="14" viewBox="0 0 17 14"><path d="M0.800 4.800 H3.200 L6.800 1.200 V12.800 L3.200 9.200 H0.800 Z" fill="none" stroke="#fff" stroke-width="1.200" stroke-linejoin="round"/><path d="M10.500 4.800 L15 9.300 M15 4.800 L10.500 9.300" stroke="#fff" stroke-width="1.200"/></svg>
<div class="t" style="left:1219px;top:734px;font-size:11px;line-height:13px;color:#fff;letter-spacing:-0.281px">ENG</div>
<div class="t" style="left:1225px;top:750.500px;font-size:11px;line-height:13px;color:#fff;letter-spacing:0.000px">IN</div>
<div class="t" style="left:1256.500px;top:734px;font-size:12px;line-height:13px;color:#fff;letter-spacing:-0.164px">11:13 AM</div>
<div class="t" style="left:1255px;top:750.500px;font-size:12px;line-height:13px;color:#fff;letter-spacing:-0.155px">9/25/2025</div>
<svg style="left:1324.500px;top:740px" width="17" height="16" viewBox="0 0 17 16"><path d="M0.700 0.700 H16.300 V12 H9.500 L7 15 V12 H0.700 Z" fill="none" stroke="#fff" stroke-width="1.300" stroke-linejoin="miter"/></svg>
<div class="a" style="left:1361px;top:728px;width:1px;height:40px;background:#555"></div>
</div>
</body>
</html>
